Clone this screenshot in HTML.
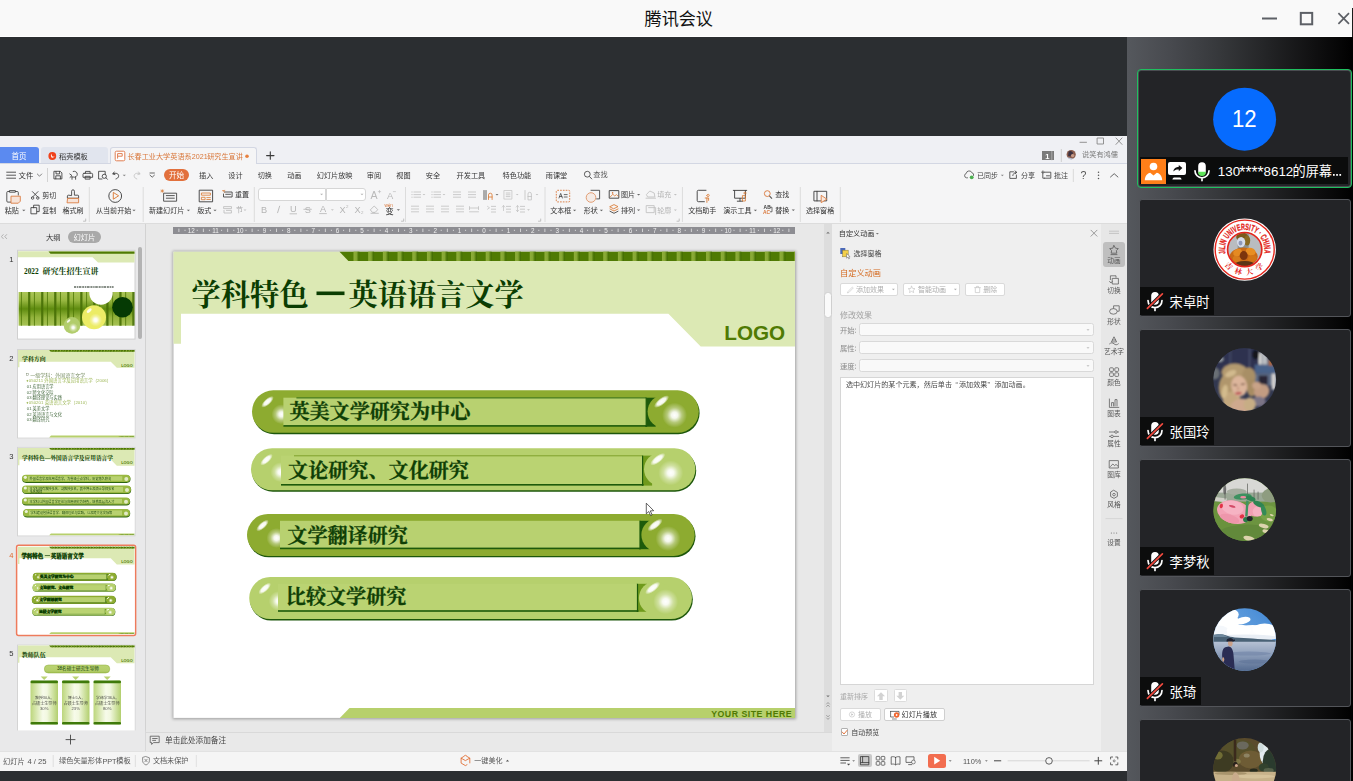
<!DOCTYPE html><html><head><meta charset="utf-8"><title>腾讯会议</title><style>
html,body{margin:0;padding:0;background:#2b2e31;overflow:hidden}
#app{position:relative;width:1353px;height:781px;overflow:hidden;background:#2b2e31;font-family:"Liberation Sans",sans-serif}
#app div{position:absolute;box-sizing:border-box}
#app svg{position:absolute;left:0;top:0;overflow:visible}
#app svg text{font-family:"Liberation Sans","Noto Sans CJK SC",sans-serif}
#app svg text.sf{font-family:"Liberation Serif","Noto Serif CJK SC",serif;font-weight:700}
</style></head><body><div id="app"><div style="left:0px;top:0px;width:1353px;height:37px;background:#f9f9f9;border-bottom:1px solid #fff"></div><div style="left:1352px;top:8px;width:1px;height:29px;background:#1c1c1c"></div><div style="left:1127px;top:37px;width:226px;height:744px;background:linear-gradient(90deg,#55585d 0%,#47494e 20%,#35373a 42%,#232426 62%,#0f0f10 84%,#000 100%)"></div><div style="left:1137px;top:68.8px;width:215.3px;height:119.2px;border:1.4px solid #1fbf5f;border-radius:4px;background:#4a4c51"></div><div style="left:1139.4px;top:71.2px;width:210.5px;height:114.4px;border-radius:2px;background:#232427"></div><div style="left:1140.4px;top:157.2px;width:207.8px;height:27px;background:#0b0c0c"></div><div style="left:1140.9px;top:159px;width:25.1px;height:25.2px;background:#ff7f19"></div><div style="left:1139px;top:199px;width:212px;height:117.6px;border:1px solid #53555a;border-radius:3px;background:#232427"></div><div style="left:1140.2px;top:287.2px;width:73.8px;height:27.4px;background:#0c0d0d"></div><div style="left:1139px;top:329px;width:212px;height:117.6px;border:1px solid #53555a;border-radius:3px;background:#232427"></div><div style="left:1140.2px;top:417.2px;width:73.8px;height:27.4px;background:#0c0d0d"></div><div style="left:1139px;top:459px;width:212px;height:117.6px;border:1px solid #53555a;border-radius:3px;background:#232427"></div><div style="left:1140.2px;top:547.2px;width:73.8px;height:27.4px;background:#0c0d0d"></div><div style="left:1139px;top:589px;width:212px;height:117.6px;border:1px solid #53555a;border-radius:3px;background:#232427"></div><div style="left:1140.2px;top:677.2px;width:61.1px;height:27.4px;background:#0c0d0d"></div><div style="left:1139px;top:718.8px;width:212px;height:117.6px;border:1px solid #53555a;border-radius:3px;background:#232427"></div><div style="left:0px;top:136px;width:1127px;height:635px;background:#f5f5f6"></div><div style="left:0px;top:136px;width:1127px;height:28px;background:#eff0f4;border-bottom:1px solid #d3d7e3"></div><div style="left:0px;top:147px;width:39.3px;height:16.4px;background:#5b8af0;border-radius:0 3px 0 0"></div><div style="left:41px;top:147px;width:67.2px;height:16.4px;background:#e1e5ee;border-radius:3px 3px 0 0"></div><div style="left:109.8px;top:146.6px;width:147.2px;height:17.4px;background:#f5f5f6;border:1px solid #d3d7e3;border-bottom:none;border-radius:3px 3px 0 0"></div><div style="left:0px;top:164px;width:1127px;height:60.4px;background:#f5f5f6;border-bottom:1px solid #dcdcdc"></div><div style="left:0px;top:224.4px;width:145.8px;height:526.2px;background:#e9e9ea;border-right:1px solid #d2d2d2"></div><div style="left:145.8px;top:224.4px;width:678.2px;height:507.9px;background:#e8e8e8"></div><div style="left:824px;top:224.4px;width:8px;height:507.9px;background:#dddddd"></div><div style="left:173px;top:227px;width:622px;height:6.7px;background:#8d8d92"></div><div style="left:145.8px;top:732.3px;width:686.2px;height:18.3px;background:#e9e9e9;border-top:1px solid #d9d9d9"></div><div style="left:832px;top:224.4px;width:269.3px;height:526.2px;background:#efefef"></div><div style="left:1101.3px;top:224.4px;width:25.7px;height:526.2px;background:#e7e7e7"></div><div style="left:1103.2px;top:241.8px;width:21.6px;height:25.4px;background:#bfbfbf;border-radius:3px"></div><div style="left:0px;top:750.6px;width:1127px;height:20.4px;background:#f5f5f5;border-top:1px solid #e2e2e2"></div><div style="left:258px;top:187.5px;width:68.3px;height:13.7px;background:#fff;border:1px solid #d6d6d6;border-radius:3px 0 0 3px"></div><div style="left:325.5px;top:187.5px;width:40.7px;height:13.7px;background:#fff;border:1px solid #d6d6d6;border-radius:0 3px 3px 0"></div><div style="left:840.4px;top:282.7px;width:57.6px;height:13.5px;background:#fff;border:1px solid #dadada;border-radius:2px"></div><div style="left:902.6px;top:282.7px;width:57.8px;height:13.5px;background:#fff;border:1px solid #dadada;border-radius:2px"></div><div style="left:965px;top:282.7px;width:40.4px;height:13.5px;background:#fff;border:1px solid #dadada;border-radius:2px"></div><div style="left:859.3px;top:323.3px;width:234.3px;height:13.1px;background:#f9f9f9;border:1px solid #d9d9d9;border-radius:2.5px"></div><div style="left:859.3px;top:341.3px;width:234.3px;height:13.1px;background:#f9f9f9;border:1px solid #d9d9d9;border-radius:2.5px"></div><div style="left:859.3px;top:359.2px;width:234.3px;height:13px;background:#f9f9f9;border:1px solid #d9d9d9;border-radius:2.5px"></div><div style="left:840.1px;top:376.5px;width:253.5px;height:308.9px;background:#fff;border:1px solid #d6d6d6"></div><div style="left:874.3px;top:689.3px;width:13.4px;height:12.9px;background:#fff;border:1px solid #dcdcdc;border-radius:1.5px"></div><div style="left:893.6px;top:689.3px;width:13.4px;height:12.9px;background:#fff;border:1px solid #dcdcdc;border-radius:1.5px"></div><div style="left:840.4px;top:707.7px;width:40.2px;height:13.5px;background:#fff;border:1px solid #dadada;border-radius:2px"></div><div style="left:884.3px;top:707.7px;width:60.4px;height:13.5px;background:#fff;border:1px solid #cfcfcf;border-radius:2px"></div><div style="left:840.6px;top:728.4px;width:7.8px;height:7.6px;background:#fff;border:1px solid #b0b0b0;border-radius:1px"></div><div style="left:858px;top:754px;width:13.6px;height:13.4px;background:#c9c9c9;border-radius:2px"></div><div style="left:927.6px;top:753.6px;width:18.6px;height:14.1px;background:#f26d4f;border-radius:2.5px"></div><div style="left:68px;top:231.3px;width:32.6px;height:11.8px;background:#a9a9a9;border-radius:6px"></div><div style="left:138.4px;top:247px;width:3.8px;height:91.8px;background:#b3b3b3;border-radius:2px"></div><div style="left:163.6px;top:169px;width:25.7px;height:12.2px;background:#e2703c;border-radius:6.2px"></div><div style="left:824.3px;top:291.5px;width:7.4px;height:26.1px;background:#fafafa;border:1px solid #cfcfcf;border-radius:3.5px"></div><div style="left:1041.8px;top:151px;width:11.8px;height:9.2px;background:#7b7b7b"></div><svg style="position:absolute;left:0;top:0" width="1127" height="781" viewBox="0 0 1127 781"><defs><linearGradient id="stg" x1="0" x2="1"><stop offset="0" stop-color="#8fae3a"/><stop offset=".5" stop-color="#84a632"/><stop offset=".85" stop-color="#4c7607"/><stop offset="1" stop-color="#3f6804"/></linearGradient><radialGradient id="glow"><stop offset="0" stop-color="#fff" stop-opacity="1"/><stop offset=".25" stop-color="#fff" stop-opacity=".9"/><stop offset=".6" stop-color="#fff" stop-opacity=".35"/><stop offset="1" stop-color="#fff" stop-opacity="0"/></radialGradient><linearGradient id="pgd" x1="0" x2="0" y1="0" y2="1"><stop offset="0" stop-color="#92b034"/><stop offset=".7" stop-color="#8aa82f"/><stop offset="1" stop-color="#7f9f28"/></linearGradient><linearGradient id="pgl" x1="0" x2="0" y1="0" y2="1"><stop offset="0" stop-color="#bad373"/><stop offset=".75" stop-color="#b4ce6a"/><stop offset="1" stop-color="#9fbd50"/></linearGradient><radialGradient id="gl2"><stop offset="0" stop-color="#fff" stop-opacity="1"/><stop offset=".55" stop-color="#fff" stop-opacity=".9"/><stop offset="1" stop-color="#fff" stop-opacity="0"/></radialGradient><filter id="b1" x="-20%" y="-50%" width="140%" height="200%"><feGaussianBlur stdDeviation=".7"/></filter><filter id="b2"><feGaussianBlur stdDeviation=".45"/></filter><filter id="sh" x="-5%" y="-5%" width="110%" height="110%"><feGaussianBlur stdDeviation="1.5"/></filter><linearGradient id="bst" x1="0" x2="1"><stop offset="0" stop-color="#4a7206" stop-opacity="0"/><stop offset=".35" stop-color="#456d05" stop-opacity=".95"/><stop offset=".7" stop-color="#4a7206" stop-opacity=".9"/><stop offset="1" stop-color="#4a7206" stop-opacity="0"/></linearGradient><linearGradient id="bam" x1="0" x2="1" spreadMethod="repeat" gradientUnits="userSpaceOnUse" gradientTransform="translate(18 0) scale(9.7 1)"><stop offset="0" stop-color="#5f8a12"/><stop offset=".12" stop-color="#3f6a05"/><stop offset=".3" stop-color="#86a83a"/><stop offset=".6" stop-color="#9dbb52"/><stop offset=".85" stop-color="#7fa22f"/><stop offset="1" stop-color="#5f8a12"/></linearGradient><linearGradient id="bamv" x1="0" x2="0" y1="0" y2="1"><stop offset="0" stop-color="#aac557"/><stop offset=".25" stop-color="#98b741"/><stop offset=".5" stop-color="#5e8b0f"/><stop offset=".75" stop-color="#93b33c"/><stop offset="1" stop-color="#a6c254"/></linearGradient><radialGradient id="yel" cx=".35" cy=".3" r=".75"><stop offset="0" stop-color="#fbfbd0"/><stop offset=".35" stop-color="#eeee70"/><stop offset="1" stop-color="#d9dc55"/></radialGradient><radialGradient id="lgr" cx=".4" cy=".35" r=".75"><stop offset="0" stop-color="#e4efc0"/><stop offset=".4" stop-color="#b4cf6a"/><stop offset="1" stop-color="#98b848"/></radialGradient><linearGradient id="cyl" x1="0" x2="1"><stop offset="0" stop-color="#bcd67c"/><stop offset=".45" stop-color="#f7fbea"/><stop offset=".6" stop-color="#f2f8e0"/><stop offset="1" stop-color="#b2cf6e"/></linearGradient><g id="bg"><rect x="173.5" y="251.7" width="621.5" height="466.2" fill="#fff"/><path fill="#dce9b4" d="M173.5 251.7H795V346.4H700.7L668.4 313.8H181V343.7H173.5z"/><path fill="#4f7a03" d="M339.5 251.7H795V261H348.4z"/><rect x="353.5" y="251.7" width="5.9" height="9.3" fill="url(#stg)"/><rect x="368.19" y="251.7" width="5.9" height="9.3" fill="url(#stg)"/><rect x="382.88" y="251.7" width="5.9" height="9.3" fill="url(#stg)"/><rect x="397.57" y="251.7" width="5.9" height="9.3" fill="url(#stg)"/><rect x="412.26" y="251.7" width="5.9" height="9.3" fill="url(#stg)"/><rect x="426.95" y="251.7" width="5.9" height="9.3" fill="url(#stg)"/><rect x="441.64" y="251.7" width="5.9" height="9.3" fill="url(#stg)"/><rect x="456.33" y="251.7" width="5.9" height="9.3" fill="url(#stg)"/><rect x="471.02" y="251.7" width="5.9" height="9.3" fill="url(#stg)"/><rect x="485.71" y="251.7" width="5.9" height="9.3" fill="url(#stg)"/><rect x="500.4" y="251.7" width="5.9" height="9.3" fill="url(#stg)"/><rect x="515.09" y="251.7" width="5.9" height="9.3" fill="url(#stg)"/><rect x="529.78" y="251.7" width="5.9" height="9.3" fill="url(#stg)"/><rect x="544.47" y="251.7" width="5.9" height="9.3" fill="url(#stg)"/><rect x="559.16" y="251.7" width="5.9" height="9.3" fill="url(#stg)"/><rect x="573.85" y="251.7" width="5.9" height="9.3" fill="url(#stg)"/><rect x="588.54" y="251.7" width="5.9" height="9.3" fill="url(#stg)"/><rect x="603.23" y="251.7" width="5.9" height="9.3" fill="url(#stg)"/><rect x="617.92" y="251.7" width="5.9" height="9.3" fill="url(#stg)"/><rect x="632.61" y="251.7" width="5.9" height="9.3" fill="url(#stg)"/><rect x="647.3" y="251.7" width="5.9" height="9.3" fill="url(#stg)"/><rect x="661.99" y="251.7" width="5.9" height="9.3" fill="url(#stg)"/><rect x="676.68" y="251.7" width="5.9" height="9.3" fill="url(#stg)"/><rect x="691.37" y="251.7" width="5.9" height="9.3" fill="url(#stg)"/><rect x="706.06" y="251.7" width="5.9" height="9.3" fill="url(#stg)"/><rect x="720.75" y="251.7" width="5.9" height="9.3" fill="url(#stg)"/><rect x="735.44" y="251.7" width="5.9" height="9.3" fill="url(#stg)"/><rect x="750.13" y="251.7" width="5.9" height="9.3" fill="url(#stg)"/><rect x="764.82" y="251.7" width="5.9" height="9.3" fill="url(#stg)"/><rect x="779.51" y="251.7" width="5.9" height="9.3" fill="url(#stg)"/><rect x="794.2" y="251.7" width="0.8" height="9.3" fill="url(#stg)"/><text x="724.3" y="340" font-size="20.7" font-weight="700" fill="#4f7a03" stroke="none">LOGO</text><path fill="#b7d06c" d="M349.5 708H795V717.9H339.8z"/><text x="711.2" y="716.9" font-size="8.75" font-weight="700" fill="#4f7a03" stroke="none" textLength="80.5">YOUR SITE HERE</text></g><g id="s4"><rect x="252.8" y="391.7" width="446.8" height="42.5" rx="21.25" fill="#1d570b"/><rect x="252" y="390.3" width="446.8" height="42.5" rx="21.25" fill="#8dab30"/><ellipse cx="267.5" cy="401.8" rx="8" ry="3.2" fill="url(#gl2)" transform="rotate(-42 267.5 401.8)"/><circle cx="281.5" cy="414.3" r="10" fill="url(#glow)"/><rect x="645.2" y="397.7" width="10.5" height="29" fill="#1d5a0b"/><rect x="283.4" y="397.7" width="362.8" height="28" fill="#b8d170"/><rect x="296.4" y="397.4" width="349.8" height="1" fill="#2f6a12"/><rect x="283.4" y="425.1" width="363.8" height="1.6" fill="#1d5a0b"/><rect x="645.6" y="397.7" width="1.2" height="29" fill="#1d5a0b"/><circle cx="664.2" cy="411.55" r="16.6" fill="#8dab30"/><ellipse cx="661.55" cy="401.55" rx="9.2" ry="3.6" fill="url(#gl2)" transform="rotate(-38 661.55 401.55)"/><circle cx="674.55" cy="415.15" r="12.5" fill="url(#glow)"/><rect x="251.8" y="449.6" width="444.4" height="42.1" rx="21.05" fill="#1d570b"/><rect x="251" y="448.2" width="444.4" height="42.1" rx="21.05" fill="#b6d06d"/><ellipse cx="266.5" cy="459.7" rx="8" ry="3.2" fill="url(#gl2)" transform="rotate(-42 266.5 459.7)"/><circle cx="280.5" cy="472.2" r="10" fill="url(#glow)"/><rect x="641.6" y="455.6" width="10.5" height="30" fill="#6f9a1c"/><rect x="281" y="455.6" width="361.6" height="29" fill="#bad372"/><rect x="294" y="455.3" width="348.6" height="1" fill="#7fa12c"/><rect x="281" y="484" width="362.6" height="1.6" fill="#1d5a0b"/><rect x="642" y="455.6" width="1.2" height="30" fill="#1d5a0b"/><circle cx="660.6" cy="469.25" r="16.6" fill="#b6d06d"/><ellipse cx="657.75" cy="459.25" rx="9.2" ry="3.6" fill="url(#gl2)" transform="rotate(-38 657.75 459.25)"/><circle cx="670.75" cy="472.85" r="12.5" fill="url(#glow)"/><rect x="247.8" y="515.4" width="447.7" height="41.9" rx="20.95" fill="#1d570b"/><rect x="247" y="514" width="447.7" height="41.9" rx="20.95" fill="#8dab30"/><ellipse cx="262.5" cy="525.5" rx="8" ry="3.2" fill="url(#gl2)" transform="rotate(-42 262.5 525.5)"/><circle cx="276.5" cy="538" r="10" fill="url(#glow)"/><rect x="639" y="520.8" width="10.5" height="28.4" fill="#1d5a0b"/><rect x="280" y="520.8" width="360" height="27.4" fill="#b8d170"/><rect x="280" y="547.6" width="361" height="1.6" fill="#1d5a0b"/><rect x="639.4" y="520.8" width="1.2" height="28.4" fill="#1d5a0b"/><circle cx="658" cy="534.95" r="16.6" fill="#8dab30"/><ellipse cx="655.05" cy="524.95" rx="9.2" ry="3.6" fill="url(#gl2)" transform="rotate(-38 655.05 524.95)"/><circle cx="668.05" cy="538.55" r="12.5" fill="url(#glow)"/><rect x="250" y="578.4" width="442.8" height="42.1" rx="21.05" fill="#1d570b"/><rect x="249.2" y="577" width="442.8" height="42.1" rx="21.05" fill="#b6d06d"/><ellipse cx="264.7" cy="588.5" rx="8" ry="3.2" fill="url(#gl2)" transform="rotate(-42 264.7 588.5)"/><circle cx="278.7" cy="601" r="10" fill="url(#glow)"/><rect x="636.5" y="583.8" width="10.5" height="28" fill="#6f9a1c"/><rect x="278" y="583.8" width="359.5" height="27" fill="#bad372"/><rect x="278" y="610.2" width="360.5" height="1.6" fill="#1d5a0b"/><rect x="636.9" y="583.8" width="1.2" height="28" fill="#1d5a0b"/><circle cx="655.5" cy="598.05" r="16.6" fill="#b6d06d"/><ellipse cx="652.65" cy="588.05" rx="9.2" ry="3.6" fill="url(#gl2)" transform="rotate(-38 652.65 588.05)"/><circle cx="665.65" cy="601.65" r="12.5" fill="url(#glow)"/></g><g id="s4t"><text class="sf" x="289.4" y="419.3" font-size="20.1" fill="#0f3f06">英美文学研究为中心</text><text class="sf" x="288.1" y="478" font-size="20.1" fill="#0f3f06">文论研究、文化研究</text><text class="sf" x="287.3" y="542.6" font-size="20.1" fill="#0f3f06">文学翻译研究</text><text class="sf" x="285.8" y="604.4" font-size="20.1" fill="#0f3f06">比较文学研究</text></g><g id="s4h"><text class="sf" x="191.6" y="304.7" font-size="29.2" fill="#0b3d02">学科特色</text><rect x="316.5" y="291.5" width="28" height="3.6" fill="#0b3d02" stroke="none"/><text class="sf" x="348.6" y="304.7" font-size="29.2" fill="#0b3d02">英语语言文学</text></g></defs><rect x="172.600" y="251" width="623.400" height="468.200" fill="#000" opacity=".3" filter="url(#sh)"/><use href="#bg"/><use href="#s4"/><use href="#s4h"/><use href="#s4t" stroke="#0f3f06" stroke-width=".28"/><g><rect x="17.5" y="250.3" width="117.5" height="88.8" fill="#fff" stroke="#d0d0d0" stroke-width="1"/><path fill="#dce9b4" d="M18 251.3H134.5V262.5H98L92.5 257.2H18z"/><path fill="#4f7a03" d="M48.5 251.6H134.5V253.7H50.5z"/><rect x="18.6" y="292" width="114.6" height="33.7" fill="url(#bamv)"/><rect x="27.5" y="292" width="3.4" height="33.7" fill="url(#bst)"/><rect x="20.9" y="292" width="1" height="33.7" fill="#4f7808" opacity=".8"/><rect x="40.53" y="292" width="3.4" height="33.7" fill="url(#bst)"/><rect x="33.93" y="292" width="1" height="33.7" fill="#4f7808" opacity=".8"/><rect x="53.56" y="292" width="3.4" height="33.7" fill="url(#bst)"/><rect x="46.96" y="292" width="1" height="33.7" fill="#4f7808" opacity=".8"/><rect x="66.59" y="292" width="3.4" height="33.7" fill="url(#bst)"/><rect x="59.99" y="292" width="1" height="33.7" fill="#4f7808" opacity=".8"/><rect x="79.62" y="292" width="3.4" height="33.7" fill="url(#bst)"/><rect x="73.02" y="292" width="1" height="33.7" fill="#4f7808" opacity=".8"/><rect x="92.65" y="292" width="3.4" height="33.7" fill="url(#bst)"/><rect x="86.05" y="292" width="1" height="33.7" fill="#4f7808" opacity=".8"/><rect x="105.68" y="292" width="3.4" height="33.7" fill="url(#bst)"/><rect x="99.08" y="292" width="1" height="33.7" fill="#4f7808" opacity=".8"/><rect x="118.71" y="292" width="3.4" height="33.7" fill="url(#bst)"/><rect x="112.11" y="292" width="1" height="33.7" fill="#4f7808" opacity=".8"/><rect x="131.74" y="292" width="3.4" height="33.7" fill="url(#bst)"/><rect x="125.14" y="292" width="1" height="33.7" fill="#4f7808" opacity=".8"/><circle cx="101" cy="293" r="11.7" fill="#fff"/><circle cx="122.5" cy="307.2" r="10.3" fill="#053a04"/><circle cx="94" cy="317.2" r="12" fill="#ecec66"/><ellipse cx="89.2" cy="310.6" rx="3" ry="1.5" fill="#fff" opacity=".85" transform="rotate(-40 89.2 310.6)"/><circle cx="95.6" cy="320" r="6.5" fill="url(#glow)"/><circle cx="72" cy="325.4" r="8.3" fill="#b2cd6c"/><ellipse cx="68.6" cy="321" rx="2.2" ry="1.1" fill="#fff" opacity=".85" transform="rotate(-40 68.6 321)"/><circle cx="73.2" cy="327.6" r="4.6" fill="url(#glow)"/><text class="sf" x="24" y="274.2" font-size="7.3" fill="#0b3d02">2022</text><text class="sf" x="42.6" y="274.2" font-size="8" fill="#0b3d02">研究生招生宣讲</text><path d="M74 287h39.6" stroke="#1c2a1c" stroke-width="1.5" stroke-dasharray="2.1 .7 1.4 .6 2.6 .8" opacity=".7"/></g><rect x="17.5" y="349.5" width="117.5" height="88.4" fill="#fff" stroke="#d4d4d4" stroke-width="1"/><use href="#bg" transform="translate(18,350) scale(0.18745) translate(-173.5,-251.7)"/><rect x="17.5" y="447.4" width="117.5" height="88.4" fill="#fff" stroke="#d4d4d4" stroke-width="1"/><use href="#bg" transform="translate(18,447.9) scale(0.18745) translate(-173.5,-251.7)"/><rect x="16.6" y="545.3" width="119" height="90.2" rx="2" fill="#fff" stroke="#ee7b5c" stroke-width="1.5"/><use href="#bg" transform="translate(18,546.7) scale(0.18745) translate(-173.5,-251.7)"/><use href="#s4" transform="translate(18,546.7) scale(0.18745) translate(-173.5,-251.7)"/><use href="#s4t" transform="translate(18,546.7) scale(0.18745) translate(-173.5,-251.7)" stroke="#0b3d02" stroke-width="2.2"/><use href="#s4h" transform="translate(18,547.9) scale(0.18745) translate(-173.5,-251.7)" stroke="#0b3d02" stroke-width="2.2"/><rect x="17.5" y="645.1" width="117.5" height="88.4" fill="#fff" stroke="#d4d4d4" stroke-width="1"/><use href="#bg" transform="translate(18,645.6) scale(0.18745) translate(-173.5,-251.7)"/><text class="sf" x="22" y="361" font-size="5.9" fill="#0b3d02">学科方向</text><g opacity=".8"><rect x="26.6" y="373.6" width="1.6" height="2" fill="none" stroke="#4b5f3a" stroke-width=".4"/><text x="30.2" y="376.7" font-size="5" fill="#55703a">一级学科：外国语言文学</text><text x="28.8" y="382.3" font-size="4.4" fill="#86a62e">050211 外国语言学及应用语言学（2006）</text><text x="26.8" y="388.3" font-size="4.2" fill="#0d3d05">01 应用语言学</text><text x="26.8" y="393.5" font-size="4.2" fill="#0d3d05">02 跨文化交际</text><text x="26.8" y="399.1" font-size="4.2" fill="#0d3d05">03 翻译理论与实践</text><text x="28.8" y="404.3" font-size="4.4" fill="#86a62e">050201 英语语言文学（2010）</text><text x="26.8" y="410.1" font-size="4.2" fill="#0d3d05">01 英美文学</text><text x="26.8" y="415.8" font-size="4.2" fill="#0d3d05">02 英语语言与文化</text><text x="26.8" y="421.3" font-size="4.2" fill="#0d3d05">03 翻译研究</text><path d="M26.4 380.8l1-1.1l1 1.1l-1 1.1z" fill="#86a62e"/><path d="M26.4 402.8l1-1.1l1 1.1l-1 1.1z" fill="#86a62e"/></g><text class="sf" x="22" y="459.7" font-size="5.7" fill="#0b3d02">学科特色—外国语言学及应用语言学</text><rect x="22.2" y="475.2" width="108.3" height="7.7" rx="3.85" fill="#2c6410"/><rect x="22" y="474.7" width="108.3" height="7.3" rx="3.85" fill="#9ab942"/><rect x="28" y="476.2" width="94.3" height="4.5" fill="#b8d170"/><circle cx="25.3" cy="477.3" r="1.6" fill="#fff" opacity=".8"/><circle cx="126.3" cy="479.05" r="2" fill="#fff" opacity=".7"/><text x="29.5" y="480" font-size="3.15" fill="#0d3d05" opacity=".9">外国语言学及应用语言学，为省级重点学科，历史悠久积淀</text><rect x="22.2" y="485.9" width="109" height="8.2" rx="4.1" fill="#2c6410"/><rect x="22" y="485.4" width="109" height="7.8" rx="4.1" fill="#9ab942"/><rect x="28" y="486.9" width="95" height="5" fill="#b8d170"/><circle cx="25.3" cy="488" r="1.6" fill="#fff" opacity=".8"/><circle cx="127" cy="490" r="2" fill="#fff" opacity=".7"/><text x="29.5" y="489.5" font-size="3.15" fill="#0d3d05" opacity=".9">本学科现有教授多名、副教授多名，其中博士及硕士导师多名</text><text x="29.7" y="492.6" font-size="3.15" fill="#0d3d05" opacity=".9">多名教师</text><rect x="22.2" y="497.9" width="108" height="7.6" rx="3.8" fill="#2c6410"/><rect x="22" y="497.4" width="108" height="7.2" rx="3.8" fill="#9ab942"/><rect x="28" y="498.9" width="94" height="4.4" fill="#b8d170"/><circle cx="25.3" cy="500" r="1.6" fill="#fff" opacity=".8"/><circle cx="126" cy="501.7" r="2" fill="#fff" opacity=".7"/><text x="29.5" y="502.6" font-size="3.15" fill="#0d3d05" opacity=".9">本学科以外国语言学理论与应用研究为特色，培养高层次人才</text><rect x="23.2" y="509.4" width="107" height="8.1" rx="4.05" fill="#2c6410"/><rect x="23" y="508.9" width="107" height="7.7" rx="4.05" fill="#9ab942"/><rect x="29" y="510.4" width="93" height="4.9" fill="#b8d170"/><circle cx="26.3" cy="511.5" r="1.6" fill="#fff" opacity=".8"/><circle cx="126" cy="513.45" r="2" fill="#fff" opacity=".7"/><text x="30.5" y="514.4" font-size="3.15" fill="#0d3d05" opacity=".9">学科建设包括语言学、翻译理论与实践，以及跨文化交际等</text><text class="sf" x="21.8" y="657" font-size="6" fill="#0b3d02">教师队伍</text><rect x="44.3" y="665" width="65.5" height="8" rx="4" fill="url(#pgl)" stroke="#8fae3f" stroke-width=".5"/><text x="57" y="670.4" font-size="4.6" fill="#0d3d05">38名硕士研究生导师</text><rect x="30.5" y="680.6" width="27.5" height="44" rx="2" fill="url(#cyl)"/><rect x="30.5" y="680.6" width="27.5" height="2.6" rx="1.2" fill="#3f7a0a"/><rect x="30.5" y="722" width="27.5" height="2.6" rx="1.2" fill="#3f7a0a"/><path d="M40.7 676.5h7l-3.5 3.6z" fill="#b9d272"/><g opacity=".78"><text x="35" y="699" font-size="3.9" fill="#222">教授30人,</text><text x="32" y="704.5" font-size="4.1" fill="#222">占硕士生导师</text><text x="40" y="709.7" font-size="4.2" fill="#222">30%</text></g><rect x="62" y="680.6" width="27.5" height="44" rx="2" fill="url(#cyl)"/><rect x="62" y="680.6" width="27.5" height="2.6" rx="1.2" fill="#3f7a0a"/><rect x="62" y="722" width="27.5" height="2.6" rx="1.2" fill="#3f7a0a"/><path d="M72.2 676.5h7l-3.5 3.6z" fill="#b9d272"/><g opacity=".78"><text x="67.8" y="699" font-size="3.9" fill="#222">博士5人,</text><text x="63.5" y="704.5" font-size="4.1" fill="#222">占硕士生导师</text><text x="71.5" y="709.7" font-size="4.2" fill="#222">23%</text></g><rect x="93.5" y="680.6" width="27.5" height="44" rx="2" fill="url(#cyl)"/><rect x="93.5" y="680.6" width="27.5" height="2.6" rx="1.2" fill="#3f7a0a"/><rect x="93.5" y="722" width="27.5" height="2.6" rx="1.2" fill="#3f7a0a"/><path d="M103.7 676.5h7l-3.5 3.6z" fill="#b9d272"/><g opacity=".78"><text x="96" y="699" font-size="3.9" fill="#222">学缘学36人,</text><text x="95" y="704.5" font-size="4.1" fill="#222">占硕士生导师</text><text x="103" y="709.7" font-size="4.2" fill="#222">80%</text></g><rect x="0" y="730.4" width="145.3" height="20.2" fill="#e9e9ea"/></svg><svg width="1127" height="781" viewBox="0 0 1127 781" style="filter:blur(.42px)"><text x="11.6" y="158.7" font-size="7.5" fill="#fff">首页</text><circle cx="52.3" cy="156" r="3.9" fill="#f0421c"/><path d="M51.2 153.6c-.6 1.6-.3 3.2.6 4.1c1.3.3 2.4-.5 2.9-1.9c-.8 1.1-2 1.1-2.6.3c-.6-.8-.6-1.7-.9-2.5z" fill="#fff"/><text x="59" y="158.59" font-size="7.2" fill="#333">稻壳模板</text><rect x="115.2" y="151.2" width="9.6" height="9.6" rx="1.3" fill="#fff" stroke="#e07e52" stroke-width="1"/><path d="M117.6 158.6v-5h4.6v2.6h-4.6" fill="none" stroke="#e07e52" stroke-width="1"/><text x="127.4" y="158.57" font-size="7.15" fill="#d9773a">长春工业大学英语系</text><text x="191.75" y="158.57" font-size="7.15" fill="#d9773a">2021</text><text x="207.15" y="158.57" font-size="7.15" fill="#d9773a">研究生宣讲</text><circle cx="247" cy="156.2" r="1.8" fill="#e8813f"/><path d="M266.600 155.600h7.400M270.300 151.900v7.400" stroke="#3a3a3a" stroke-width="1.1" fill="none" stroke-linejoin="round" stroke-linecap="round"/><path d="M1080 142.3h6.5" stroke="#888" stroke-width="0.9" fill="none" stroke-linejoin="round" stroke-linecap="round"/><path d="M1097.5 138h6v6h-6z" stroke="#888" stroke-width="0.9" fill="none" stroke-linejoin="round" stroke-linecap="round"/><path d="M1116 138l6 6.4M1122 138l-6 6.4" stroke="#888" stroke-width="0.9" fill="none" stroke-linejoin="round" stroke-linecap="round"/><text x="1045.2" y="158.6" font-size="7.6" font-weight="700" fill="#fff">1</text><rect x="1051.3" y="151" width="1" height="9.2" fill="#aaa"/><path d="M1061.3 149L1061.3 162" stroke="#cfcfcf" stroke-width="1" fill="none"/><circle cx="1071.2" cy="154.6" r="4.6" fill="#8b5e4e"/><path d="M1068.6 151.5a3 3 0 0 1 4.5 1.5l-1.5 3.5l-3.5-.5z" fill="#3c3140"/><circle cx="1072.6" cy="155.6" r="1.7" fill="#c79a86"/><path d="M1067.5 157.2a4.6 4.6 0 0 0 6 1.5z" fill="#b9c4d8"/><text x="1082" y="157.19" font-size="7.2" fill="#7a7a7a">说笑有鸿儒</text><path d="M6.3 172.2L16 172.2" stroke="#444" stroke-width="0.9" fill="none"/><path d="M6.3 175.2L16 175.2" stroke="#444" stroke-width="0.9" fill="none"/><path d="M6.3 178.2L16 178.2" stroke="#444" stroke-width="0.9" fill="none"/><text x="18.6" y="177.86" font-size="7.4" fill="#333">文件</text><path d="M37.3 174l2.2 2.2l2.2-2.2" stroke="#666" stroke-width="0.8" fill="none" stroke-linejoin="round" stroke-linecap="round"/><path d="M47.5 168L47.5 182" stroke="#d3d3d3" stroke-width="1" fill="none"/><path d="M54.3 171.3h6l1.6 1.6v6h-7.6zM56 171.5v2.4h3.6v-2.4M55.8 178.8v-3h4.6v3" stroke="#3b3b3b" stroke-width="0.85" fill="none" stroke-linejoin="round" stroke-linecap="round"/><path d="M73.2 171.4a3 3 0 1 1 0 5.6h-1.2M69.8 174l2.2 1.6l-2 1.8M72 177v2.3M75.6 177v2.3" stroke="#3b3b3b" stroke-width="0.85" fill="none" stroke-linejoin="round" stroke-linecap="round"/><path d="M84 173.3h7.6a1 1 0 0 1 1 1v3h-9.6v-3a1 1 0 0 1 1-1zM85.5 173.2v-1.8h4.6v1.8M85.5 176.3h4.6v2.8h-4.6z" stroke="#3b3b3b" stroke-width="0.85" fill="none" stroke-linejoin="round" stroke-linecap="round"/><path d="M105.2 174.5v-3.2h-6.6v7.7h3.4M107.4 179.3l-1.5-1.6" stroke="#3b3b3b" stroke-width="0.85" fill="none" stroke-linejoin="round" stroke-linecap="round"/><circle cx="104.3" cy="176.3" r="2.1" fill="none" stroke="#3b3b3b" stroke-width=".85"/><path d="M114.2 172l-1.4 1.9l2.1.6M113 173.8c3.3-1.5 6 .1 5.6 2.5c-.3 1.5-1.4 2.2-2.6 2.6" stroke="#3b3b3b" stroke-width="0.9" fill="none" stroke-linejoin="round" stroke-linecap="round"/><path d="M122.67 174.69h3.25l-1.62 1.62z" fill="#888"/><path d="M138.6 172l1.4 1.9l-2.1.6M139.8 173.8c-3.3-1.5-6 .1-5.6 2.5c.3 1.5 1.4 2.2 2.6 2.6" stroke="#c4c4c4" stroke-width="0.9" fill="none" stroke-linejoin="round" stroke-linecap="round"/><path d="M150 173h4.4" stroke="#444" stroke-width="0.8" fill="none" stroke-linejoin="round" stroke-linecap="round"/><path d="M150 175.2l2.2 2l2.2-2" stroke="#444" stroke-width="0.8" fill="none" stroke-linejoin="round" stroke-linecap="round"/><text x="168.9" y="177.84" font-size="7.6" fill="#fff">开始</text><text x="199" y="177.77" font-size="7.15" fill="#333">插入</text><text x="228.3" y="177.77" font-size="7.15" fill="#333">设计</text><text x="257.7" y="177.77" font-size="7.15" fill="#333">切换</text><text x="287.2" y="177.77" font-size="7.15" fill="#333">动画</text><text x="316.8" y="177.77" font-size="7.15" fill="#333">幻灯片放映</text><text x="366.8" y="177.77" font-size="7.15" fill="#333">审阅</text><text x="396.3" y="177.77" font-size="7.15" fill="#333">视图</text><text x="425.8" y="177.77" font-size="7.15" fill="#333">安全</text><text x="456.6" y="177.77" font-size="7.15" fill="#333">开发工具</text><text x="502.6" y="177.77" font-size="7.15" fill="#333">特色功能</text><text x="545.8" y="177.77" font-size="7.15" fill="#333">雨课堂</text><circle cx="587.3" cy="174.2" r="2.9" fill="none" stroke="#444" stroke-width=".85"/><path d="M589.4 176.4L592 179.2" stroke="#444" stroke-width="0.9" fill="none"/><text x="593.3" y="177.39" font-size="7.2" fill="#555">查找</text><path d="M967.5 177.8h-1a2.2 2.2 0 0 1-.3-4.3a3 3 0 0 1 5.8-.6a2 2 0 0 1 1.6 2.6" stroke="#555" stroke-width="0.85" fill="none" stroke-linejoin="round" stroke-linecap="round"/><circle cx="971.7" cy="177.3" r="1.9" fill="#4caf50"/><text x="977" y="177.82" font-size="7" fill="#444">已同步</text><path d="M1000.8 174.85h3l-1.5 1.5z" fill="#888"/><path d="M1013.5 171.8h-3.7v6.6h6.6v-3.4M1012.8 175.6c.3-2 1.6-3.2 3.7-3.3M1015 171l1.8 1.3l-1.6 1.5" stroke="#444" stroke-width="0.85" fill="none" stroke-linejoin="round" stroke-linecap="round"/><text x="1021" y="177.82" font-size="7" fill="#444">分享</text><path d="M1044.5 172.2h6.3v6h-6.3M1044.5 178.2h-1.7v-4.5M1041.6 172.2h2.6M1042.9 170.9v2.6M1046.5 175.8h3" stroke="#444" stroke-width="0.85" fill="none" stroke-linejoin="round" stroke-linecap="round"/><text x="1054" y="177.82" font-size="7" fill="#444">批注</text><path d="M1073.3 169L1073.3 182" stroke="#d9d9d9" stroke-width="1" fill="none"/><text x="1080.6" y="179" font-size="10.6" fill="#555">?</text><circle cx="1098.5" cy="172.2" r=".75" fill="#555"/><circle cx="1098.5" cy="175.3" r=".75" fill="#555"/><circle cx="1098.5" cy="178.4" r=".75" fill="#555"/><path d="M1110.5 177l3.7-3.3l3.7 3.3" stroke="#555" stroke-width="0.9" fill="none" stroke-linejoin="round" stroke-linecap="round"/><path d="M9.5 191.5h-1.7a1 1 0 0 0-1 1v8.6a1 1 0 0 0 1 1h3M15.6 191.5h1.7a1 1 0 0 1 1 1v2.6M9.8 190.6h5.6v1.6h-5.6z" stroke="#3b3b3b" stroke-width="0.85" fill="none" stroke-linejoin="round" stroke-linecap="round"/><path d="M11 196.2h9.3v5l-2 2h-7.3z" fill="#f6e3d8" stroke="#d9773a" stroke-width=".85" stroke-linejoin="round"/><text x="4.8" y="212.84" font-size="7.05" fill="#333">粘贴</text><path d="M22.18 209.69h3.25l-1.62 1.62z" fill="#666"/><path d="M32.4 191.6l5.6 5.6M38 191.6l-5.6 5.6" stroke="#3b3b3b" stroke-width="0.85" fill="none" stroke-linejoin="round" stroke-linecap="round"/><circle cx="32.6" cy="198" r="1.25" fill="none" stroke="#3b3b3b" stroke-width=".8"/><circle cx="37.8" cy="198" r="1.25" fill="none" stroke="#3b3b3b" stroke-width=".8"/><text x="42.3" y="197.54" font-size="7.05" fill="#333">剪切</text><path d="M33.6 207.8v-2.6h5.6v6.4h-2M31.3 207.6h5.4v6.2h-5.4z" stroke="#3b3b3b" stroke-width="0.85" fill="none" stroke-linejoin="round" stroke-linecap="round"/><text x="42.3" y="212.84" font-size="7.05" fill="#333">复制</text><path d="M71.6 195.2v-4a1.4 1.4 0 0 1 2.8 0v4h3.4a.8.8 0 0 1 .8.8v2.2h-11.2v-2.2a.8.8 0 0 1 .8-.8z" stroke="#3b3b3b" stroke-width="0.85" fill="none" stroke-linejoin="round" stroke-linecap="round"/><path d="M67.6 198.4h11v4.4h-11.6z" fill="#f6e3d8" stroke="#d9773a" stroke-width=".85" stroke-linejoin="round"/><text x="62.4" y="212.84" font-size="7.05" fill="#333">格式刷</text><path d="M83.5 221.2h2.2v-2.2" stroke="#aaa" stroke-width="0.7" fill="none" stroke-linejoin="round" stroke-linecap="round"/><path d="M89.3 187L89.3 222" stroke="#dcdcdc" stroke-width="1" fill="none"/><circle cx="115.2" cy="196" r="6.4" fill="none" stroke="#3b3b3b" stroke-width=".9"/><path d="M113.3 192.8v6.4l5-3.2z" stroke="#d9772f" stroke-width="0.9" fill="none" stroke-linejoin="round" stroke-linecap="round"/><text x="96" y="212.84" font-size="7.05" fill="#333">从当前开始</text><path d="M132.38 209.69h3.25l-1.62 1.62z" fill="#666"/><path d="M143.2 187L143.2 222" stroke="#dcdcdc" stroke-width="1" fill="none"/><path d="M164 193.2h12.6v8h-12.6zM166.3 195.6h8M166.3 198.2h8" stroke="#3b3b3b" stroke-width="0.85" fill="none" stroke-linejoin="round" stroke-linecap="round"/><path d="M162.3 189.6v2.8M160.9 191h2.8M161.3 190l2 2M163.3 190l-2 2" stroke="#d9772f" stroke-width="0.6" fill="none" stroke-linejoin="round" stroke-linecap="round"/><text x="149" y="212.84" font-size="7.05" fill="#333">新建幻灯片</text><path d="M186.78 209.69h3.25l-1.62 1.62z" fill="#666"/><path d="M199.6 190.2h13v11.6h-13z" stroke="#3b3b3b" stroke-width="0.9" fill="none" stroke-linejoin="round" stroke-linecap="round"/><path d="M201.8 193h8.6v2.2h-8.6zM201.8 197.3h3.3v2.4h-3.3zM206.8 197.6h3.6M206.8 199.5h3.6" stroke="#d9772f" stroke-width="0.8" fill="none" stroke-linejoin="round" stroke-linecap="round"/><text x="197.3" y="212.84" font-size="7.05" fill="#333">版式</text><path d="M213.38 209.69h3.25l-1.62 1.62z" fill="#666"/><path d="M224.3 192h7.8v5h-8.6v-3M225.7 194.3h4.8" stroke="#3b3b3b" stroke-width="0.85" fill="none" stroke-linejoin="round" stroke-linecap="round"/><path d="M223 190.6l1.6 1.8M224.8 190.4l-2 .3" stroke="#d9772f" stroke-width="0.7" fill="none" stroke-linejoin="round" stroke-linecap="round"/><text x="235" y="197.04" font-size="7.05" fill="#333">重置</text><path d="M224 206.6h7.5v2h-7.5zM226.4 210.4h5v2.6h-7.4v-2.6" stroke="#bdbdbd" stroke-width="0.85" fill="none" stroke-linejoin="round" stroke-linecap="round"/><text x="236" y="212.34" font-size="7.05" fill="#aaa">节</text><path d="M243.5 209.45h3l-1.5 1.5z" fill="#c4c4c4"/><path d="M254.3 187L254.3 222" stroke="#dcdcdc" stroke-width="1" fill="none"/><path d="M320.1 193.85h3l-1.5 1.5z" fill="#b5b5b5"/><path d="M360.5 193.85h3l-1.5 1.5z" fill="#b5b5b5"/><text x="370.6" y="199" font-size="10.6" fill="#b9b9b9">A</text><text x="387" y="199" font-size="9.4" fill="#b9b9b9">A</text><path d="M378.3 191.6h2.4M379.5 190.4v2.4M393.3 191.6h2.2" stroke="#b9b9b9" stroke-width="0.6" fill="none" stroke-linejoin="round" stroke-linecap="round"/><text x="261" y="212.7" font-size="9.2" fill="#b5b5b5">B</text><text x="290" y="212.3" font-size="9.2" fill="#b5b5b5">U</text><text x="304.8" y="212.7" font-size="9.2" fill="#b5b5b5">S</text><text x="320" y="212" font-size="9.2" fill="#b5b5b5">A</text><text x="339.5" y="212.7" font-size="9.2" fill="#b5b5b5">X</text><text x="354.5" y="212.7" font-size="9.2" fill="#b5b5b5">X</text><path d="M279.600 206.200l-2 6.500" stroke="#b5b5b5" stroke-width="0.9" fill="none" stroke-linejoin="round" stroke-linecap="round"/><path d="M290 213.8h6.6M303.8 209.3h7.6M319.6 213.6h6.8" stroke="#b5b5b5" stroke-width="0.8" fill="none" stroke-linejoin="round" stroke-linecap="round"/><text x="346" y="207.6" font-size="4.4" fill="#b5b5b5">2</text><text x="361" y="213.8" font-size="4.4" fill="#b5b5b5">2</text><path d="M330.9 209.25h3l-1.5 1.5z" fill="#c4c4c4"/><path d="M370.6 209.6l3.6-3.6l3.6 3.6l-2.6 2.8h-2.4zM371 213.3h7.4" stroke="#b5b5b5" stroke-width="0.8" fill="none" stroke-linejoin="round" stroke-linecap="round"/><text x="385.6" y="214.3" font-size="8.2" fill="#333">变</text><text x="384.4" y="207.3" font-size="4.6" fill="#d9773a">wén</text><path d="M396.77 209.19h3.25l-1.62 1.62z" fill="#666"/><path d="M401.5 221.2h2.2v-2.2" stroke="#aaa" stroke-width="0.7" fill="none" stroke-linejoin="round" stroke-linecap="round"/><path d="M405.5 187L405.5 222" stroke="#dcdcdc" stroke-width="1" fill="none"/><path d="M413.5 192L421 192" stroke="#c0c0c0" stroke-width="0.8" fill="none"/><path d="M413.5 194.6L421 194.6" stroke="#c0c0c0" stroke-width="0.8" fill="none"/><path d="M413.5 197.2L421 197.2" stroke="#c0c0c0" stroke-width="0.8" fill="none"/><rect x="411.5" y="191.5" width="1" height="1" fill="#c0c0c0"/><rect x="411.5" y="194.1" width="1" height="1" fill="#c0c0c0"/><rect x="411.5" y="196.7" width="1" height="1" fill="#c0c0c0"/><path d="M433.5 192L441 192" stroke="#c0c0c0" stroke-width="0.8" fill="none"/><path d="M433.5 194.6L441 194.6" stroke="#c0c0c0" stroke-width="0.8" fill="none"/><path d="M433.5 197.2L441 197.2" stroke="#c0c0c0" stroke-width="0.8" fill="none"/><rect x="431.5" y="191.5" width="1" height="1" fill="#c0c0c0"/><rect x="431.5" y="194.1" width="1" height="1" fill="#c0c0c0"/><rect x="431.5" y="196.7" width="1" height="1" fill="#c0c0c0"/><path d="M422.62 193.91h2.75l-1.38 1.38z" fill="#c0c0c0"/><path d="M442.62 193.91h2.75l-1.38 1.38z" fill="#c0c0c0"/><path d="M453 192L461 192" stroke="#c0c0c0" stroke-width="0.8" fill="none"/><path d="M453 194.6L461 194.6" stroke="#c0c0c0" stroke-width="0.8" fill="none"/><path d="M453 197.2L461 197.2" stroke="#c0c0c0" stroke-width="0.8" fill="none"/><path d="M468 192L476 192" stroke="#c0c0c0" stroke-width="0.8" fill="none"/><path d="M468 194.6L476 194.6" stroke="#c0c0c0" stroke-width="0.8" fill="none"/><path d="M468 197.2L476 197.2" stroke="#c0c0c0" stroke-width="0.8" fill="none"/><path d="M484 190.5v9M486 190.5v9" stroke="#3b3b3b" stroke-width="0.8" fill="none" stroke-linejoin="round" stroke-linecap="round"/><path d="M488.5 199.5v-4.5a1.8 1.8 0 0 1 3.6 0v4.5M488.5 197h3.6" stroke="#d9772f" stroke-width="0.8" fill="none" stroke-linejoin="round" stroke-linecap="round"/><path d="M495.5 194.05h3l-1.5 1.5z" fill="#777"/><path d="M504.3 190.5h7.6v8.6h-7.6z" stroke="#c0c0c0" stroke-width="0.7" fill="none" stroke-linejoin="round" stroke-linecap="round"/><path d="M505.8 193L510.4 193" stroke="#c0c0c0" stroke-width="0.8" fill="none"/><path d="M505.8 194.8L510.4 194.8" stroke="#c0c0c0" stroke-width="0.8" fill="none"/><path d="M505.8 196.6L510.4 196.6" stroke="#c0c0c0" stroke-width="0.8" fill="none"/><path d="M515.83 193.91h2.75l-1.38 1.38z" fill="#c0c0c0"/><path d="M525 190.5v9M528 199.5v-5.5a1.7 1.7 0 0 1 3.4 0v5.5zM528 196.5h3.4" stroke="#c0c0c0" stroke-width="0.8" fill="none" stroke-linejoin="round" stroke-linecap="round"/><path d="M535.62 193.91h2.75l-1.38 1.38z" fill="#c0c0c0"/><path d="M411 206.2L419 206.2" stroke="#c0c0c0" stroke-width="0.8" fill="none"/><path d="M411 209L419 209" stroke="#c0c0c0" stroke-width="0.8" fill="none"/><path d="M411 211.8L419 211.8" stroke="#c0c0c0" stroke-width="0.8" fill="none"/><path d="M426 206.2L434 206.2" stroke="#c0c0c0" stroke-width="0.8" fill="none"/><path d="M426 209L434 209" stroke="#c0c0c0" stroke-width="0.8" fill="none"/><path d="M426 211.8L434 211.8" stroke="#c0c0c0" stroke-width="0.8" fill="none"/><path d="M441 206.2L449 206.2" stroke="#c0c0c0" stroke-width="0.8" fill="none"/><path d="M441 209L449 209" stroke="#c0c0c0" stroke-width="0.8" fill="none"/><path d="M441 211.8L449 211.8" stroke="#c0c0c0" stroke-width="0.8" fill="none"/><path d="M456 206.2L464 206.2" stroke="#c0c0c0" stroke-width="0.8" fill="none"/><path d="M456 209L464 209" stroke="#c0c0c0" stroke-width="0.8" fill="none"/><path d="M456 211.8L464 211.8" stroke="#c0c0c0" stroke-width="0.8" fill="none"/><path d="M469.5 206.6v3M478.5 206.6v3M469.5 208h9M469.5 211.8h9" stroke="#c0c0c0" stroke-width="0.8" fill="none" stroke-linejoin="round" stroke-linecap="round"/><path d="M491 206.4L496 206.4" stroke="#c0c0c0" stroke-width="0.8" fill="none"/><path d="M491 209.2L496 209.2" stroke="#c0c0c0" stroke-width="0.8" fill="none"/><path d="M491 212L496 212" stroke="#c0c0c0" stroke-width="0.8" fill="none"/><path d="M487.5 206.4l2 1.4l-2 1.4" stroke="#c0c0c0" stroke-width="0.7" fill="none" stroke-linejoin="round" stroke-linecap="round"/><path d="M506 206.4L511 206.4" stroke="#c0c0c0" stroke-width="0.8" fill="none"/><path d="M506 209.2L511 209.2" stroke="#c0c0c0" stroke-width="0.8" fill="none"/><path d="M506 212L511 212" stroke="#c0c0c0" stroke-width="0.8" fill="none"/><path d="M503.5 205.6v5M502.3 207l1.2-1.4l1.2 1.4" stroke="#c0c0c0" stroke-width="0.7" fill="none" stroke-linejoin="round" stroke-linecap="round"/><path d="M520 206.4L525 206.4" stroke="#c0c0c0" stroke-width="0.8" fill="none"/><path d="M520 209.2L525 209.2" stroke="#c0c0c0" stroke-width="0.8" fill="none"/><path d="M520 212L525 212" stroke="#c0c0c0" stroke-width="0.8" fill="none"/><path d="M517.5 205.6v6M516.3 207l1.2-1.4l1.2 1.4M516.3 210.2l1.2 1.4l1.2-1.4" stroke="#c0c0c0" stroke-width="0.7" fill="none" stroke-linejoin="round" stroke-linecap="round"/><path d="M527.12 209.31h2.75l-1.38 1.38z" fill="#c0c0c0"/><path d="M538.5 221.2h2.2v-2.2" stroke="#aaa" stroke-width="0.7" fill="none" stroke-linejoin="round" stroke-linecap="round"/><path d="M545 187L545 222" stroke="#dcdcdc" stroke-width="1" fill="none"/><rect x="556.3" y="190.3" width="13.4" height="11.6" rx="1" fill="none" stroke="#d9773a" stroke-width=".9" stroke-dasharray="1.7 1.1"/><path d="M559 198l1.7-4.6l1.7 4.6M559.6 196.5h2.2M564.2 194.6h3M564.2 197h3" stroke="#3b3b3b" stroke-width="0.75" fill="none" stroke-linejoin="round" stroke-linecap="round"/><text x="550.2" y="212.84" font-size="7.05" fill="#333">文本框</text><path d="M572.98 209.69h3.25l-1.62 1.62z" fill="#666"/><path d="M591 190.3h8.6v8.6h-3" stroke="#3b3b3b" stroke-width="0.85" fill="none" stroke-linejoin="round" stroke-linecap="round"/><circle cx="591" cy="197.5" r="4.8" fill="#f4ebe6" stroke="#dc8a58" stroke-width=".8"/><text x="583.8" y="212.84" font-size="7.05" fill="#333">形状</text><path d="M599.77 209.69h3.25l-1.62 1.62z" fill="#666"/><path d="M609.6 190.6h9.2v7.6h-9.2z" stroke="#3b3b3b" stroke-width="0.9" fill="none" stroke-linejoin="round" stroke-linecap="round"/><path d="M610.4 196.8l2.4-2.6l2 1.8l1.6-1.4l2 1.8" stroke="#d9772f" stroke-width="0.75" fill="none" stroke-linejoin="round" stroke-linecap="round"/><circle cx="612.6" cy="192.9" r=".8" fill="#d9773a"/><text x="621" y="197.14" font-size="7.05" fill="#333">图片</text><path d="M636.98 193.99h3.25l-1.62 1.62z" fill="#666"/><path d="M646 198.2h9.6M647.4 196.6l-1-2l3.4-3.6l4.4 2l.6 3.6z" stroke="#c0c0c0" stroke-width="0.85" fill="none" stroke-linejoin="round" stroke-linecap="round"/><text x="657.3" y="197.14" font-size="7.05" fill="#b5b5b5">填充</text><path d="M673.9 194.05h3l-1.5 1.5z" fill="#c0c0c0"/><path d="M610 206.6l4-2l4 2l-4 2zM610 209l4 2l4-2" stroke="#d9772f" stroke-width="0.85" fill="none" stroke-linejoin="round" stroke-linecap="round"/><path d="M610 211.3l4 2l4-2" stroke="#3b3b3b" stroke-width="0.85" fill="none" stroke-linejoin="round" stroke-linecap="round"/><text x="621" y="212.54" font-size="7.05" fill="#333">排列</text><path d="M636.98 209.39h3.25l-1.62 1.62z" fill="#666"/><path d="M646.6 205.6h7.6v7h-7.6zM648.6 207.6h7v7" stroke="#c0c0c0" stroke-width="0.85" fill="none" stroke-linejoin="round" stroke-linecap="round"/><text x="657.3" y="212.54" font-size="7.05" fill="#b5b5b5">轮廓</text><path d="M673.9 209.45h3l-1.5 1.5z" fill="#c0c0c0"/><path d="M677 221.2h2.2v-2.2" stroke="#aaa" stroke-width="0.7" fill="none" stroke-linejoin="round" stroke-linecap="round"/><path d="M682.4 187L682.4 222" stroke="#dcdcdc" stroke-width="1" fill="none"/><path d="M706 190.3h-7.6a1.2 1.2 0 0 0-1.2 1.2v9a1.2 1.2 0 0 0 1.2 1.2h6" stroke="#3b3b3b" stroke-width="0.9" fill="none" stroke-linejoin="round" stroke-linecap="round"/><path d="M706.8 195.4a1.2 1.2 0 1 1 0 .1M705.2 198h3.4v2.4M706.9 198v4.4" stroke="#d9772f" stroke-width="0.85" fill="none" stroke-linejoin="round" stroke-linecap="round"/><text x="688.2" y="212.84" font-size="7.05" fill="#333">文档助手</text><path d="M733.3 190.4h13.4M734.6 190.6v7.6h10.8v-7.6M740 198.4v2.6M737.3 201.2h5.4" stroke="#3b3b3b" stroke-width="0.9" fill="none" stroke-linejoin="round" stroke-linecap="round"/><path d="M744 193a1 1 0 1 1 0 .1M742.8 195.6h2.6v5.4h-2.6z" stroke="#d9772f" stroke-width="0.8" fill="none" stroke-linejoin="round" stroke-linecap="round"/><text x="723.3" y="212.84" font-size="7.05" fill="#333">演示工具</text><path d="M753.77 209.69h3.25l-1.62 1.62z" fill="#666"/><circle cx="767.3" cy="193.6" r="2.9" fill="none" stroke="#d9773a" stroke-width=".9"/><path d="M769.4 195.8L772 198.6" stroke="#555" stroke-width="1.1" fill="none"/><text x="775.2" y="197.24" font-size="7.05" fill="#333">查找</text><text x="763.6" y="209" font-size="4.9" font-weight="700" fill="#3b3b3b">AB</text><text x="763" y="213.8" font-size="4.9" font-weight="700" fill="#d9773a">AC</text><path d="M770 207.2h2v4.6h-1.6" stroke="#3b3b3b" stroke-width="0.7" fill="none" stroke-linejoin="round" stroke-linecap="round"/><text x="775.2" y="212.64" font-size="7.05" fill="#333">替换</text><path d="M791.67 209.49h3.25l-1.62 1.62z" fill="#666"/><path d="M800.3 187L800.3 222" stroke="#dcdcdc" stroke-width="1" fill="none"/><path d="M814.3 191.3h12.4v9.6h-12.4zM817 191.3v9.6" stroke="#3b3b3b" stroke-width="0.9" fill="none" stroke-linejoin="round" stroke-linecap="round"/><path d="M821.2 195.3v7.4l5.6-3.6z" fill="#f8e9df" stroke="#d9773a" stroke-width=".85" stroke-linejoin="round"/><text x="806" y="212.84" font-size="7.05" fill="#333">选择窗格</text><path d="M840.3 187L840.3 222" stroke="#dcdcdc" stroke-width="1" fill="none"/><path d="M3.2 234.6l-1.8 2l1.8 2M6.6 234.6l-1.8 2l1.8 2" stroke="#999" stroke-width="0.7" fill="none" stroke-linejoin="round" stroke-linecap="round"/><text x="46" y="239.83" font-size="7.3" fill="#333">大纲</text><text x="73.4" y="239.83" font-size="7.3" fill="#fff">幻灯片</text><text x="9.3" y="262.3" font-size="7.6" fill="#333">1</text><text x="9.3" y="360.5" font-size="7.6" fill="#333">2</text><text x="9.3" y="458.9" font-size="7.6" fill="#333">3</text><text x="9.3" y="557.9" font-size="7.6" fill="#e06a2e">4</text><text x="9.3" y="656.1" font-size="7.6" fill="#333">5</text><path d="M66 739.6h9M70.5 735.1v9" stroke="#444" stroke-width="0.9" fill="none" stroke-linejoin="round" stroke-linecap="round"/><g font-size="6.3" fill="#f0f0f0" text-anchor="middle"><text x="191.2" y="232.6">12</text><text x="215.6" y="232.6">11</text><text x="240" y="232.6">10</text><text x="264.4" y="232.6">9</text><text x="288.8" y="232.6">8</text><text x="313.2" y="232.6">7</text><text x="337.6" y="232.6">6</text><text x="362" y="232.6">5</text><text x="386.4" y="232.6">4</text><text x="410.8" y="232.6">3</text><text x="435.2" y="232.6">2</text><text x="459.6" y="232.6">1</text><text x="484" y="232.6">0</text><text x="508.4" y="232.6">1</text><text x="532.8" y="232.6">2</text><text x="557.2" y="232.6">3</text><text x="581.6" y="232.6">4</text><text x="606" y="232.6">5</text><text x="630.4" y="232.6">6</text><text x="654.8" y="232.6">7</text><text x="679.2" y="232.6">8</text><text x="703.6" y="232.6">9</text><text x="728" y="232.6">10</text><text x="752.4" y="232.6">11</text><text x="776.8" y="232.6">12</text></g><rect x="178.5" y="228.6" width=".8" height="3.4" fill="#e4e4e4"/><rect x="184.5" y="229.8" width="1" height="1" fill="#e4e4e4"/><rect x="202.9" y="228.6" width=".8" height="3.4" fill="#e4e4e4"/><rect x="196.7" y="229.8" width="1" height="1" fill="#e4e4e4"/><rect x="208.9" y="229.8" width="1" height="1" fill="#e4e4e4"/><rect x="227.3" y="228.6" width=".8" height="3.4" fill="#e4e4e4"/><rect x="221.1" y="229.8" width="1" height="1" fill="#e4e4e4"/><rect x="233.3" y="229.8" width="1" height="1" fill="#e4e4e4"/><rect x="251.7" y="228.6" width=".8" height="3.4" fill="#e4e4e4"/><rect x="245.5" y="229.8" width="1" height="1" fill="#e4e4e4"/><rect x="257.7" y="229.8" width="1" height="1" fill="#e4e4e4"/><rect x="276.1" y="228.6" width=".8" height="3.4" fill="#e4e4e4"/><rect x="269.9" y="229.8" width="1" height="1" fill="#e4e4e4"/><rect x="282.1" y="229.8" width="1" height="1" fill="#e4e4e4"/><rect x="300.5" y="228.6" width=".8" height="3.4" fill="#e4e4e4"/><rect x="294.3" y="229.8" width="1" height="1" fill="#e4e4e4"/><rect x="306.5" y="229.8" width="1" height="1" fill="#e4e4e4"/><rect x="324.9" y="228.6" width=".8" height="3.4" fill="#e4e4e4"/><rect x="318.7" y="229.8" width="1" height="1" fill="#e4e4e4"/><rect x="330.9" y="229.8" width="1" height="1" fill="#e4e4e4"/><rect x="349.3" y="228.6" width=".8" height="3.4" fill="#e4e4e4"/><rect x="343.1" y="229.8" width="1" height="1" fill="#e4e4e4"/><rect x="355.3" y="229.8" width="1" height="1" fill="#e4e4e4"/><rect x="373.7" y="228.6" width=".8" height="3.4" fill="#e4e4e4"/><rect x="367.5" y="229.8" width="1" height="1" fill="#e4e4e4"/><rect x="379.7" y="229.8" width="1" height="1" fill="#e4e4e4"/><rect x="398.1" y="228.6" width=".8" height="3.4" fill="#e4e4e4"/><rect x="391.9" y="229.8" width="1" height="1" fill="#e4e4e4"/><rect x="404.1" y="229.8" width="1" height="1" fill="#e4e4e4"/><rect x="422.5" y="228.6" width=".8" height="3.4" fill="#e4e4e4"/><rect x="416.3" y="229.8" width="1" height="1" fill="#e4e4e4"/><rect x="428.5" y="229.8" width="1" height="1" fill="#e4e4e4"/><rect x="446.9" y="228.6" width=".8" height="3.4" fill="#e4e4e4"/><rect x="440.7" y="229.8" width="1" height="1" fill="#e4e4e4"/><rect x="452.9" y="229.8" width="1" height="1" fill="#e4e4e4"/><rect x="471.3" y="228.6" width=".8" height="3.4" fill="#e4e4e4"/><rect x="465.1" y="229.8" width="1" height="1" fill="#e4e4e4"/><rect x="477.3" y="229.8" width="1" height="1" fill="#e4e4e4"/><rect x="495.7" y="228.6" width=".8" height="3.4" fill="#e4e4e4"/><rect x="489.5" y="229.8" width="1" height="1" fill="#e4e4e4"/><rect x="501.7" y="229.8" width="1" height="1" fill="#e4e4e4"/><rect x="520.1" y="228.6" width=".8" height="3.4" fill="#e4e4e4"/><rect x="513.9" y="229.8" width="1" height="1" fill="#e4e4e4"/><rect x="526.1" y="229.8" width="1" height="1" fill="#e4e4e4"/><rect x="544.5" y="228.6" width=".8" height="3.4" fill="#e4e4e4"/><rect x="538.3" y="229.8" width="1" height="1" fill="#e4e4e4"/><rect x="550.5" y="229.8" width="1" height="1" fill="#e4e4e4"/><rect x="568.9" y="228.6" width=".8" height="3.4" fill="#e4e4e4"/><rect x="562.7" y="229.8" width="1" height="1" fill="#e4e4e4"/><rect x="574.9" y="229.8" width="1" height="1" fill="#e4e4e4"/><rect x="593.3" y="228.6" width=".8" height="3.4" fill="#e4e4e4"/><rect x="587.1" y="229.8" width="1" height="1" fill="#e4e4e4"/><rect x="599.3" y="229.8" width="1" height="1" fill="#e4e4e4"/><rect x="617.7" y="228.6" width=".8" height="3.4" fill="#e4e4e4"/><rect x="611.5" y="229.8" width="1" height="1" fill="#e4e4e4"/><rect x="623.7" y="229.8" width="1" height="1" fill="#e4e4e4"/><rect x="642.1" y="228.6" width=".8" height="3.4" fill="#e4e4e4"/><rect x="635.9" y="229.8" width="1" height="1" fill="#e4e4e4"/><rect x="648.1" y="229.8" width="1" height="1" fill="#e4e4e4"/><rect x="666.5" y="228.6" width=".8" height="3.4" fill="#e4e4e4"/><rect x="660.3" y="229.8" width="1" height="1" fill="#e4e4e4"/><rect x="672.5" y="229.8" width="1" height="1" fill="#e4e4e4"/><rect x="690.9" y="228.6" width=".8" height="3.4" fill="#e4e4e4"/><rect x="684.7" y="229.8" width="1" height="1" fill="#e4e4e4"/><rect x="696.9" y="229.8" width="1" height="1" fill="#e4e4e4"/><rect x="715.3" y="228.6" width=".8" height="3.4" fill="#e4e4e4"/><rect x="709.1" y="229.8" width="1" height="1" fill="#e4e4e4"/><rect x="721.3" y="229.8" width="1" height="1" fill="#e4e4e4"/><rect x="739.7" y="228.6" width=".8" height="3.4" fill="#e4e4e4"/><rect x="733.5" y="229.8" width="1" height="1" fill="#e4e4e4"/><rect x="745.7" y="229.8" width="1" height="1" fill="#e4e4e4"/><rect x="764.1" y="228.6" width=".8" height="3.4" fill="#e4e4e4"/><rect x="757.9" y="229.8" width="1" height="1" fill="#e4e4e4"/><rect x="770.1" y="229.8" width="1" height="1" fill="#e4e4e4"/><rect x="788.5" y="228.6" width=".8" height="3.4" fill="#e4e4e4"/><rect x="782.3" y="229.8" width="1" height="1" fill="#e4e4e4"/><path d="M150.6 736.2h8.6v6.4h-5.6l-2 1.8v-1.8h-1zM152.6 738.5h4.6M152.6 740.4h3" stroke="#555" stroke-width="0.8" fill="none" stroke-linejoin="round" stroke-linecap="round"/><text x="165" y="743.45" font-size="7.65" fill="#444">单击此处添加备注</text><path d="M829.88 233.54h-3.75l1.88 -1.88z" fill="#777"/><path d="M826.25 695.42h3.5l-1.75 1.75z" fill="#777"/><path d="M826.6 706.5l1.4-1.5l1.4 1.5M826.6 704l1.4-1.5l1.4 1.5" stroke="#777" stroke-width="0.6" fill="none" stroke-linejoin="round" stroke-linecap="round"/><path d="M826.6 715.4l1.4 1.5l1.4-1.5M826.6 717.9l1.4 1.5l1.4-1.5" stroke="#777" stroke-width="0.6" fill="none" stroke-linejoin="round" stroke-linecap="round"/><text x="838.8" y="236.07" font-size="7.15" fill="#333">自定义动画</text><path d="M875.9 233.05h3l-1.5 1.5z" fill="#777"/><path d="M1091 230.2l6 6M1097 230.2l-6 6" stroke="#777" stroke-width="0.7" fill="none" stroke-linejoin="round" stroke-linecap="round"/><rect x="840.3" y="248" width="5" height="6" fill="#4a69b8"/><rect x="842.6" y="250.2" width="5.6" height="6.6" fill="#f2cf4a" stroke="#8a7a3a" stroke-width=".5"/><path d="M846.6 253.6v4.6l1.2-1l.9 1.7l.8-.4l-.9-1.6l1.5-.2z" fill="#fff" stroke="#333" stroke-width=".4"/><text x="853.6" y="256.12" font-size="7" fill="#444">选择窗格</text><text x="840" y="275.85" font-size="8.2" fill="#d4691e">自定义动画</text><path d="M848 291.6l4.4-4.6l.9.9l-4.4 4.6l-1.2.3z" stroke="#c4c4c4" stroke-width="0.6" fill="none" stroke-linejoin="round" stroke-linecap="round"/><text x="856" y="291.92" font-size="7" fill="#b0b0b0">添加效果</text><path d="M891.9 288.85h3l-1.5 1.5z" fill="#b0b0b0"/><path d="M911.6 286.2l1 2.2l2.4.3l-1.8 1.6l.5 2.3l-2.1-1.2l-2.1 1.2l.5-2.3l-1.8-1.6l2.4-.3z" stroke="#c0c0c0" stroke-width="0.6" fill="none" stroke-linejoin="round" stroke-linecap="round"/><text x="918" y="291.92" font-size="7" fill="#aaa">智能动画</text><path d="M953.9 288.85h3l-1.5 1.5z" fill="#b0b0b0"/><path d="M974.6 287.6h5.8M976.4 287.4v-1h2.2v1M975.3 288v4.6h4.4v-4.6" stroke="#c4c4c4" stroke-width="0.7" fill="none" stroke-linejoin="round" stroke-linecap="round"/><text x="983.2" y="291.92" font-size="7" fill="#b0b0b0">删除</text><text x="840" y="318.08" font-size="8" fill="#a3a3a3">修改效果</text><text x="840" y="332.63" font-size="7.3" fill="#8a8a8a">开始</text><rect x="855" y="328.6" width=".9" height=".9" fill="#8a8a8a"/><rect x="855" y="331.8" width=".9" height=".9" fill="#8a8a8a"/><path d="M1086.5 329.25h3l-1.5 1.5z" fill="#bcbcbc"/><text x="840" y="350.63" font-size="7.3" fill="#8a8a8a">属性</text><rect x="855" y="346.6" width=".9" height=".9" fill="#8a8a8a"/><rect x="855" y="349.8" width=".9" height=".9" fill="#8a8a8a"/><path d="M1086.5 347.25h3l-1.5 1.5z" fill="#bcbcbc"/><text x="840" y="368.63" font-size="7.3" fill="#8a8a8a">速度</text><rect x="855" y="364.6" width=".9" height=".9" fill="#8a8a8a"/><rect x="855" y="367.8" width=".9" height=".9" fill="#8a8a8a"/><path d="M1086.5 365.25h3l-1.5 1.5z" fill="#bcbcbc"/><g font-size="7.05" fill="#484848"><text x="845.91" y="386.54">选</text><text x="852.98" y="386.54">中</text><text x="860.05" y="386.54">幻</text><text x="867.12" y="386.54">灯</text><text x="874.19" y="386.54">片</text><text x="881.26" y="386.54">的</text><text x="888.33" y="386.54">某</text><text x="895.4" y="386.54">个</text><text x="902.47" y="386.54">元</text><text x="909.54" y="386.54">素</text><text x="916.6" y="386.54">，</text><text x="923.68" y="386.54">然</text><text x="930.75" y="386.54">后</text><text x="937.82" y="386.54">单</text><text x="944.89" y="386.54">击</text><text x="955.6" y="386.54">“</text><text x="959.03" y="386.54">添</text><text x="966.1" y="386.54">加</text><text x="973.17" y="386.54">效</text><text x="980.24" y="386.54">果</text><text x="987.6" y="386.54">”</text><text x="994.38" y="386.54">添</text><text x="1001.45" y="386.54">加</text><text x="1008.52" y="386.54">动</text><text x="1015.59" y="386.54">画</text><text x="1022.65" y="386.54">。</text></g><text x="840" y="698.72" font-size="7" fill="#a8a8a8">重新排序</text><path d="M881 692.2l4 4h-2.3v3.8h-3.4v-3.8h-2.3z" fill="#d2d2d2"/><path d="M900.3 699.8l4-4h-2.3v-3.8h-3.4v3.8h-2.3z" fill="#d2d2d2"/><circle cx="852" cy="714.5" r="2.6" fill="none" stroke="#bdbdbd" stroke-width=".6"/><path d="M851.3 713.2v2.6l2-1.3z" fill="#bdbdbd"/><text x="858" y="717.02" font-size="7" fill="#b0b0b0">播放</text><path d="M890.6 711.4h8.4v3M890.6 711.4v5.6h3" stroke="#3b3b3b" stroke-width="0.7" fill="none" stroke-linejoin="round" stroke-linecap="round"/><circle cx="896.6" cy="715" r="2.7" fill="#f0642c"/><path d="M895.9 713.7v2.6l2.1-1.3z" fill="#fff"/><path d="M892.4 719h4" stroke="#3b3b3b" stroke-width="0.6" fill="none" stroke-linejoin="round" stroke-linecap="round"/><text x="901.6" y="717.06" font-size="7.1" fill="#333">幻灯片播放</text><path d="M842.2 732l1.8 2l3-3.6" stroke="#e06a2e" stroke-width="0.9" fill="none" stroke-linejoin="round" stroke-linecap="round"/><text x="851.3" y="735.02" font-size="7" fill="#444">自动预览</text><path d="M1109 231.2L1119 231.2" stroke="#b5b5b5" stroke-width="0.7" fill="none"/><path d="M1109 233.4L1119 233.4" stroke="#b5b5b5" stroke-width="0.7" fill="none"/><g font-size="6.7" fill="#555" text-anchor="middle"><text x="1114" y="262.5">动画</text><text x="1114" y="293">切换</text><text x="1114" y="323.5">形状</text><text x="1114" y="354.3">艺术字</text><text x="1114" y="384.7">颜色</text><text x="1114" y="415.5">图表</text><text x="1114" y="446">属性</text><text x="1114" y="477">图库</text><text x="1114" y="507.3">风格</text><text x="1114" y="545.4">设置</text></g><path d="M1114 245.6l1.5 2.6l2.8.4l-1.9 2l.4 2.6h-5.6l.4-2.6l-1.9-2l2.8-.4zM1111 254.6h6" stroke="#555" stroke-width="0.75" fill="none" stroke-linejoin="round" stroke-linecap="round"/><path d="M1110.4 279.6v-3.8h5.6v1.6M1112.6 278.4h5.8v5.6h-5.8zM1109.6 281.4l1.2 1.6l1.4-1.4" stroke="#555" stroke-width="0.75" fill="none" stroke-linejoin="round" stroke-linecap="round"/><path d="M1113.6 308.2v-2.4h5.6v5.4h-1.6" stroke="#555" stroke-width="0.75" fill="none" stroke-linejoin="round" stroke-linecap="round"/><ellipse cx="1113.4" cy="311.4" rx="3.8" ry="2.8" fill="none" stroke="#555" stroke-width=".75"/><path d="M1111.6 341.6l2.4-4.8l2.4 4.8zM1112.4 340h3.2M1109.6 343.8c1.4-1.3 3-1.3 4.4 0c1.4 1.3 3 1.3 4.4 0" stroke="#555" stroke-width="0.75" fill="none" stroke-linejoin="round" stroke-linecap="round"/><rect x="1109.6" y="367.8" width="3.8" height="3.6" rx=".9" fill="none" stroke="#555" stroke-width=".75"/><rect x="1114.8" y="367.8" width="3.8" height="3.6" rx=".9" fill="none" stroke="#555" stroke-width=".75"/><rect x="1109.6" y="372.8" width="3.8" height="3.6" rx=".9" fill="none" stroke="#555" stroke-width=".75"/><rect x="1114.8" y="372.8" width="3.8" height="3.6" rx=".9" fill="none" stroke="#555" stroke-width=".75"/><path d="M1109.4 399v8.4h9.4M1111.6 406v-3.4h2v3.4M1115 406v-6.4h2v6.4" stroke="#555" stroke-width="0.75" fill="none" stroke-linejoin="round" stroke-linecap="round"/><path d="M1109.4 432h9.2M1109.4 436.4h9.2" stroke="#555" stroke-width="0.75" fill="none" stroke-linejoin="round" stroke-linecap="round"/><circle cx="1116" cy="432" r="1.3" fill="#e7e7e7" stroke="#555" stroke-width=".7"/><circle cx="1112" cy="436.4" r="1.3" fill="#e7e7e7" stroke="#555" stroke-width=".7"/><path d="M1109.6 460.6h8.8v7.4h-8.8zM1110.6 466.4l2.2-2.4l1.8 1.6l1.4-1.2l1.8 1.6" stroke="#555" stroke-width="0.75" fill="none" stroke-linejoin="round" stroke-linecap="round"/><path d="M1114 490.4l3.4 2v4l-3.4 2l-3.4-2v-4z" stroke="#555" stroke-width="0.75" fill="none" stroke-linejoin="round" stroke-linecap="round"/><circle cx="1114" cy="494.6" r="1.3" fill="none" stroke="#555" stroke-width=".7"/><path d="M1105.5 518.6L1122.5 518.6" stroke="#d0d0d0" stroke-width="0.8" fill="none"/><circle cx="1111.4" cy="533" r=".6" fill="#777"/><circle cx="1114" cy="533" r=".6" fill="#777"/><circle cx="1116.6" cy="533" r=".6" fill="#777"/><text x="3" y="763.51" font-size="7.25" fill="#555">幻灯片</text><text x="27.4" y="763.6" font-size="7.7" fill="#555">4 / 25</text><path d="M53.2 755L53.2 767" stroke="#dedede" stroke-width="1" fill="none"/><text x="59" y="763.49" font-size="7.2" fill="#555">绿色矢量形体</text><text x="102.4" y="763.6" font-size="7.3" fill="#555">PPT</text><text x="116.2" y="763.49" font-size="7.2" fill="#555">模板</text><path d="M135.3 755L135.3 767" stroke="#dedede" stroke-width="1" fill="none"/><path d="M146 756.6l3.4 1.2v3c0 2-1.6 3.4-3.4 4.2c-1.8-.8-3.4-2.2-3.4-4.2v-3zM144.8 759.2l2.4 2.6M147.2 759.2l-2.4 2.6" stroke="#666" stroke-width="0.7" fill="none" stroke-linejoin="round" stroke-linecap="round"/><text x="153" y="763.45" font-size="7.07" fill="#555">文档未保护</text><path d="M196.3 755L196.3 767" stroke="#e0e0e0" stroke-width="1" fill="none"/><path d="M463.6 756.6l-2.5 1.5v5l4.3 2.5l1.6-.9M467 756.5l2.8 1.600v4.8M461.2 758.2l4.2 2.400l4.300-2.400M464.200 756l1.200-.7l1.200.7" stroke="#e06a2e" stroke-width="0.85" fill="none" stroke-linejoin="round" stroke-linecap="round"/><text x="474.3" y="763.45" font-size="7.07" fill="#555">一键美化</text><path d="M509.12 761.41h-3.25l1.62 -1.62z" fill="#555"/><path d="M840.4 757.8L849.6 757.8" stroke="#444" stroke-width="0.85" fill="none"/><path d="M840.4 760.4L849.6 760.4" stroke="#444" stroke-width="0.85" fill="none"/><path d="M840.4 763L846 763" stroke="#444" stroke-width="0.85" fill="none"/><path d="M846.98 763.79h3.25l-1.62 1.62z" fill="#444"/><path d="M852.23 760.31h2.75l-1.38 1.38z" fill="#777"/><path d="M860.8 756.6h8v8.2h-8zM860.8 762.6h8M862.6 756.8v5.6" stroke="#333" stroke-width="0.8" fill="none" stroke-linejoin="round" stroke-linecap="round"/><rect x="876.2" y="756.4" width="3.6" height="3.6" rx=".7" fill="none" stroke="#444" stroke-width=".75"/><rect x="881.2" y="756.4" width="3.6" height="3.6" rx=".7" fill="none" stroke="#444" stroke-width=".75"/><rect x="876.2" y="761.6" width="3.6" height="3.6" rx=".7" fill="none" stroke="#444" stroke-width=".75"/><rect x="881.2" y="761.6" width="3.6" height="3.6" rx=".7" fill="none" stroke="#444" stroke-width=".75"/><path d="M895.6 757.4c-1.4-.9-2.8-.9-4.4-.5v7.4c1.6-.4 3-.4 4.4.5c1.4-.9 2.8-.9 4.4-.5v-7.4c-1.6-.4-3-.4-4.4.5zM895.6 757.4v7.4" stroke="#444" stroke-width="0.75" fill="none" stroke-linejoin="round" stroke-linecap="round"/><path d="M906.4 756.8h7.6v5.6h-7.6zM908.6 764.6h3.2" stroke="#444" stroke-width="0.75" fill="none" stroke-linejoin="round" stroke-linecap="round"/><circle cx="913.4" cy="762" r="1.9" fill="#f5f5f5" stroke="#444" stroke-width=".6"/><path d="M934.2 756.8v7.8l6-3.9z" fill="#fff"/><path d="M948.7 760.25h3l-1.5 1.5z" fill="#777"/><text x="963" y="763.6" font-size="7.4" fill="#555">110%</text><path d="M985.02 760.31h2.75l-1.38 1.38z" fill="#777"/><path d="M994 760.8L1001.2 760.8" stroke="#444" stroke-width="1" fill="none"/><path d="M1007.6 760.8L1089.6 760.8" stroke="#d6d6d6" stroke-width="1" fill="none"/><circle cx="1049" cy="760.9" r="3.3" fill="#f5f5f5" stroke="#444" stroke-width=".85"/><path d="M1094.8 760.8h7M1098.3 757.3v7" stroke="#444" stroke-width="1" fill="none" stroke-linejoin="round" stroke-linecap="round"/><path d="M1110.6 759v-2h2M1115.8 757h2v2M1117.8 762.8v2h-2M1112.6 764.8h-2v-2" stroke="#444" stroke-width="0.8" fill="none" stroke-linejoin="round" stroke-linecap="round"/><circle cx="1114.2" cy="760.9" r="1" fill="none" stroke="#444" stroke-width=".6"/><path d="M646.3 503.2v10.6l2.5-2.3l1.8 4l1.5-.7l-1.8-3.9l3.4-.2z" fill="#fff" stroke="#222" stroke-width=".7"/></svg><svg width="1353" height="781" viewBox="0 0 1353 781"><text x="644.6" y="25.2" font-size="17.1" fill="#111">腾讯会议</text><path d="M1262 18.5h15" stroke="#5d6066" stroke-width="2" fill="none"/><rect x="1300.8" y="12.9" width="11.4" height="11.4" fill="none" stroke="#5d6066" stroke-width="2"/><path d="M1338.4 13.2l10.6 10.6M1349 13.2l-10.6 10.6" stroke="#5d6066" stroke-width="1.7" fill="none"/><circle cx="1244.6" cy="119.2" r="31.5" fill="#066bfe"/><text x="1244.3" y="127.2" text-anchor="middle" font-family="Liberation Sans,sans-serif" font-size="23.6" fill="#fff" textLength="24.6" lengthAdjust="spacingAndGlyphs">12</text><circle cx="1153.5" cy="166.5" r="3.8" fill="#fff"/><path d="M1144.8 180.2c.2-4.6 2.6-6.6 5.4-7.4l3.3 2.6l3.3-2.6c2.8.8 5.2 2.8 5.4 7.4z" fill="#fff"/><rect x="1168" y="162" width="18" height="13" rx="2" fill="#fff"/><path d="M1172.4 179.4c.6-1.6 1.4-1.8 2.4-1.8h4.4c1 0 1.8.2 2.4 1.8z" fill="#fff"/><path d="M1173.2 171.6c.6-3 2.6-4.6 5.6-4.8v-1.9l3.6 3.2l-3.6 3.2v-1.9c-2.4-.1-4.2.5-5.6 2.2z" fill="#111"/><rect x="1198.2" y="162.2" width="7.6" height="12.8" rx="3.8" fill="#fff"/><path d="M1198.2 171.8h7.6v.4a3.8 3.8 0 0 1-7.6 0z" fill="#5fe35a"/><path d="M1195 170.8a7 7 0 0 0 14 0M1202 178v2.6" fill="none" stroke="#fff" stroke-width="1.7" stroke-linecap="round"/><text x="1217.8" y="175.7" font-size="13.4" fill="#fff">130</text><text x="1239.33" y="178.3" font-size="15.6" fill="#fff">****</text><text x="1263.49" y="175.7" font-size="13.4" fill="#fff">8612</text><text x="1292.49" y="176.3" font-size="13.2" fill="#fff">的屏幕</text><rect x="1332.99" y="174" width="1.7" height="1.8" fill="#fff"/><rect x="1336.19" y="174" width="1.7" height="1.8" fill="#fff"/><rect x="1339.39" y="174" width="1.7" height="1.8" fill="#fff"/><rect x="1151.2" y="292" width="7.6" height="12.8" rx="3.8" fill="#fff"/><path d="M1148 300.6a7 7 0 0 0 14 0M1155 307.8v2.6" fill="none" stroke="#fff" stroke-width="1.7" stroke-linecap="round"/><path d="M1147.4 308.4l15 -14.6" stroke="#0c0d0d" stroke-width="3.4"/><path d="M1147.4 308.4l15 -14.6" stroke="#f04a3f" stroke-width="1.7" stroke-linecap="round"/><text x="1169.6" y="306.5" font-size="13.3" fill="#fff">宋卓时</text><rect x="1151.2" y="422" width="7.6" height="12.8" rx="3.8" fill="#fff"/><path d="M1148 430.6a7 7 0 0 0 14 0M1155 437.8v2.6" fill="none" stroke="#fff" stroke-width="1.7" stroke-linecap="round"/><path d="M1147.4 438.4l15 -14.6" stroke="#0c0d0d" stroke-width="3.4"/><path d="M1147.4 438.4l15 -14.6" stroke="#f04a3f" stroke-width="1.7" stroke-linecap="round"/><text x="1169.6" y="436.5" font-size="13.3" fill="#fff">张国玲</text><rect x="1151.2" y="552" width="7.6" height="12.8" rx="3.8" fill="#fff"/><path d="M1148 560.6a7 7 0 0 0 14 0M1155 567.8v2.6" fill="none" stroke="#fff" stroke-width="1.7" stroke-linecap="round"/><path d="M1147.4 568.4l15 -14.6" stroke="#0c0d0d" stroke-width="3.4"/><path d="M1147.4 568.4l15 -14.6" stroke="#f04a3f" stroke-width="1.7" stroke-linecap="round"/><text x="1169.6" y="566.5" font-size="13.3" fill="#fff">李梦秋</text><rect x="1151.2" y="682" width="7.6" height="12.8" rx="3.8" fill="#fff"/><path d="M1148 690.6a7 7 0 0 0 14 0M1155 697.8v2.6" fill="none" stroke="#fff" stroke-width="1.7" stroke-linecap="round"/><path d="M1147.4 698.4l15 -14.6" stroke="#0c0d0d" stroke-width="3.4"/><path d="M1147.4 698.4l15 -14.6" stroke="#f04a3f" stroke-width="1.7" stroke-linecap="round"/><text x="1169.6" y="696.5" font-size="13.3" fill="#fff">张琦</text></svg><svg width="1353" height="781" viewBox="0 0 1353 781"><defs><filter id="ab" x="-10%" y="-10%" width="120%" height="120%"><feGaussianBlur stdDeviation=".7"/></filter><filter id="ab2" x="-10%" y="-10%" width="120%" height="120%"><feGaussianBlur stdDeviation="1.05"/></filter><clipPath id="ac0"><circle cx="1244.7" cy="249.6" r="31.4"/></clipPath><clipPath id="ac1"><circle cx="1244.7" cy="379.6" r="31.4"/></clipPath><clipPath id="ac2"><circle cx="1244.7" cy="509.6" r="31.4"/></clipPath><clipPath id="ac3"><circle cx="1244.7" cy="639.6" r="31.4"/></clipPath><clipPath id="ac4"><circle cx="1244.7" cy="769.4" r="31.4"/></clipPath><clipPath id="ac0i"><circle cx="1244.7" cy="249.6" r="16.6"/></clipPath><linearGradient id="wat" x1="0" x2="0" y1="0" y2="1"><stop offset="0" stop-color="#b9c4d6"/><stop offset=".45" stop-color="#8c9db9"/><stop offset="1" stop-color="#4f668c"/></linearGradient><linearGradient id="sky" x1="0" x2="1" y1="1" y2="0"><stop offset="0" stop-color="#8ebce8"/><stop offset="1" stop-color="#3f86d4"/></linearGradient></defs><circle cx="1244.7" cy="249.6" r="31.2" fill="#fff"/><circle cx="1244.7" cy="249.6" r="29.5" fill="none" stroke="#e3261c" stroke-width="1.4"/><g clip-path="url(#ac0i)"><rect x="1226.7" y="231.6" width="36" height="36" fill="#b9bcc0"/><g filter="url(#ab)"><rect x="1237.7" y="231.6" width="11" height="36" fill="#8d8f8c"/><ellipse cx="1242.2" cy="237.1" rx="6" ry="4.5" fill="#7a5a1e"/><ellipse cx="1247.2" cy="240.6" rx="3" ry="5" fill="#8a6a22"/><ellipse cx="1241.1" cy="242.1" rx="4.2" ry="5.2" fill="#d5dbea"/><ellipse cx="1240.5" cy="243.1" rx="2" ry="2.4" fill="#8e98b8"/><ellipse cx="1243.7" cy="256.6" rx="14" ry="9" fill="#c96a16"/><ellipse cx="1237.7" cy="252.6" rx="4.5" ry="3.5" fill="#e58a22" transform="rotate(-20 1237.7 252.6)"/><ellipse cx="1250.7" cy="251.6" rx="5" ry="3.8" fill="#e88e24" transform="rotate(15 1250.7 251.6)"/><ellipse cx="1243.7" cy="255.6" rx="4" ry="4.5" fill="#7c3510"/><ellipse cx="1236.7" cy="259.1" rx="4" ry="3" fill="#d87c1c" transform="rotate(20 1236.7 259.1)"/><ellipse cx="1252.2" cy="258.6" rx="4.5" ry="3.2" fill="#d27418" transform="rotate(-25 1252.2 258.6)"/><ellipse cx="1244.7" cy="264.6" rx="10" ry="3.6" fill="#5a3418"/></g></g><circle cx="1244.7" cy="249.6" r="17.1" fill="none" stroke="#e3261c" stroke-width="1.7"/><path id="arc0" d="M1225.43 253.7A19.7 19.7 0 1 1 1263.97 253.7" fill="none"/><text font-family="Liberation Sans,sans-serif" font-weight="700" font-size="9" fill="#e3261c" stroke="#e3261c" stroke-width=".3" textLength="69.14" lengthAdjust="spacingAndGlyphs"><textPath href="#arc0">JILIN UNIVERSITY · CHINA</textPath></text><text class="sf" x="0" y="2.8" text-anchor="middle" font-size="7.5" fill="#e3261c" transform="translate(1229 265.86) rotate(44)">吉</text><text class="sf" x="0" y="2.8" text-anchor="middle" font-size="7.5" fill="#e3261c" transform="translate(1238.47 271.32) rotate(16)">林</text><text class="sf" x="0" y="2.8" text-anchor="middle" font-size="7.5" fill="#e3261c" transform="translate(1249.4 271.71) rotate(-12)">大</text><text class="sf" x="0" y="2.8" text-anchor="middle" font-size="7.5" fill="#e3261c" transform="translate(1259.23 266.91) rotate(-40)">学</text><g clip-path="url(#ac1)"><rect x="1212.7" y="347.6" width="64" height="64" fill="#323850"/><g filter="url(#ab2)"><rect x="1212.7" y="347.6" width="50" height="26" fill="#2d3350"/><rect x="1229.7" y="347.6" width="0.8" height="18" fill="#6a7390" opacity="0.7"/><rect x="1249.2" y="347.6" width="0.8" height="22" fill="#6a7390" opacity="0.7"/><rect x="1254.7" y="364.6" width="24" height="9" fill="#4a628a"/><rect x="1252.7" y="373.6" width="26" height="12" fill="#5d6c86"/><rect x="1258.7" y="375.6" width="9" height="9" fill="#2a2536"/><rect x="1261.7" y="351.6" width="6" height="13" fill="#b9bcc0"/><rect x="1258.7" y="352.6" width="2.6" height="12" fill="#e8e8e4"/><rect x="1268.7" y="359.6" width="4" height="6" fill="#b86a3a"/><ellipse cx="1255.7" cy="354.6" rx="3.5" ry="5" fill="#15151c"/><ellipse cx="1220.7" cy="359.6" rx="3" ry="2" fill="#9aa0a8" transform="rotate(-30 1220.7 359.6)"/><rect x="1271.7" y="373.6" width="4" height="16" fill="#d5d3d0"/><ellipse cx="1214.7" cy="373.6" rx="5" ry="6" fill="#6b6f74"/><ellipse cx="1234.7" cy="372.6" rx="13" ry="9" fill="#b39a70"/><ellipse cx="1248.7" cy="376.6" rx="7" ry="9" fill="#a88f66"/><ellipse cx="1227.7" cy="387.6" rx="9" ry="14" fill="#b0966c"/><ellipse cx="1231.7" cy="400.6" rx="9" ry="9" fill="#c3a87e"/><ellipse cx="1251.7" cy="387.6" rx="5" ry="9" fill="#a78c63"/><ellipse cx="1230.7" cy="373.6" rx="6" ry="3" fill="#d2ba8e" transform="rotate(-25 1230.7 373.6)"/><ellipse cx="1224.7" cy="391.6" rx="3" ry="7" fill="#d3bb8d" transform="rotate(10 1224.7 391.6)"/><ellipse cx="1239.2" cy="386.1" rx="8" ry="10.5" fill="#dcb59b" transform="rotate(-8 1239.2 386.1)"/><ellipse cx="1235.2" cy="385" rx="2.2" ry="0.7" fill="#6a4a3a" transform="rotate(8 1235.2 385)"/><ellipse cx="1242.9" cy="384.2" rx="2.4" ry="0.7" fill="#6a4a3a" transform="rotate(-8 1242.9 384.2)"/><ellipse cx="1238.1" cy="388.6" rx="1.2" ry="2.2" fill="#c99c84"/><ellipse cx="1238.5" cy="393.3" rx="3.3" ry="1.2" fill="#b8434a" transform="rotate(-6 1238.5 393.3)"/><ellipse cx="1241.7" cy="406.6" rx="11" ry="8" fill="#cfa98e"/><ellipse cx="1261.7" cy="391.6" rx="8" ry="7" fill="#c39c82" transform="rotate(-30 1261.7 391.6)"/><ellipse cx="1256.7" cy="385.6" rx="4.5" ry="3.6" fill="#c9a388"/><ellipse cx="1258.7" cy="401.6" rx="7" ry="5" fill="#7c7486"/><ellipse cx="1249.7" cy="404.6" rx="6" ry="7" fill="#c7ad85"/></g></g><g clip-path="url(#ac2)"><rect x="1212.7" y="477.6" width="64" height="64" fill="#6c9440"/><g filter="url(#ab)"><rect x="1212.7" y="476.6" width="64" height="24" fill="#d8d8d5"/><rect x="1212.7" y="492.6" width="64" height="9" fill="#9ba896"/><ellipse cx="1270.7" cy="495.6" rx="9" ry="7" fill="#8e9c80"/><ellipse cx="1236.7" cy="491.6" rx="10" ry="3" fill="#a6ada0"/><rect x="1212.7" y="497.6" width="14" height="4" fill="#d0d0c8" transform="rotate(8 1219.7 499.6)"/><rect x="1247.3" y="483.6" width="0.7" height="16" fill="#5c5f5a"/><rect x="1253.7" y="489.6" width="0.7" height="10" fill="#5c5f5a"/><rect x="1257.7" y="491.6" width="0.7" height="8" fill="#5c5f5a"/><rect x="1224.7" y="487.6" width="0.7" height="12" fill="#5c5f5a"/><ellipse cx="1224.7" cy="489.6" rx="1.5" ry="5" fill="#555" opacity="0.7"/><ellipse cx="1220.7" cy="521.6" rx="12" ry="14" fill="#6a923e"/><ellipse cx="1248.7" cy="533.6" rx="30" ry="9" fill="#62893a"/><ellipse cx="1268.7" cy="513.6" rx="9" ry="8" fill="#78a246"/><ellipse cx="1234.2" cy="512.1" rx="17.5" ry="11.5" fill="#f3a3b6" transform="rotate(14 1234.2 512.1)"/><ellipse cx="1232.7" cy="507.6" rx="11" ry="7" fill="#f6b3c3" transform="rotate(10 1232.7 507.6)"/><ellipse cx="1229.7" cy="518.6" rx="10" ry="4" fill="#ee96ab" transform="rotate(18 1229.7 518.6)"/><ellipse cx="1255.2" cy="509.1" rx="8" ry="7.5" fill="#f1a0b3" transform="rotate(8 1255.2 509.1)"/><ellipse cx="1257.7" cy="511.6" rx="5" ry="5" fill="#f6b2c2"/><ellipse cx="1232.2" cy="506.4" rx="3.4" ry="1.1" fill="#d24a66" transform="rotate(14 1232.2 506.4)"/><ellipse cx="1221.3" cy="506" rx="1.6" ry="2.2" fill="#e23244" transform="rotate(15 1221.3 506)"/><ellipse cx="1241.9" cy="516.4" rx="2.4" ry="2" fill="#e23244" transform="rotate(-30 1241.9 516.4)"/><ellipse cx="1242.7" cy="496.6" rx="9" ry="3" fill="#3d9160" transform="rotate(-5 1242.7 496.6)"/><ellipse cx="1250.7" cy="498.6" rx="5" ry="2.4" fill="#2f8452" transform="rotate(20 1250.7 498.6)"/><rect x="1245.7" y="500.6" width="2.4" height="16" fill="#3f9462" transform="rotate(4 1246.9 508.6)"/><ellipse cx="1245.7" cy="519.6" rx="2.6" ry="2.6" fill="#2c7a4a"/><ellipse cx="1243.2" cy="497.3" rx="3" ry="1.3" fill="#f08aa2"/><ellipse cx="1258.7" cy="504.2" rx="6" ry="2.6" fill="#2f8452" transform="rotate(25 1258.7 504.2)"/><ellipse cx="1263.7" cy="510.6" rx="2.4" ry="5" fill="#358a56" transform="rotate(-15 1263.7 510.6)"/><ellipse cx="1249.7" cy="518.6" rx="3" ry="2.6" fill="#23252a"/><ellipse cx="1263.7" cy="526" rx="5" ry="2" fill="#ddd3ae" transform="rotate(15 1263.7 526)"/><ellipse cx="1266.7" cy="531.6" rx="4.4" ry="1.9" fill="#ddd3ae" transform="rotate(15 1266.7 531.6)"/><ellipse cx="1249.2" cy="538.6" rx="6" ry="2.4" fill="#ddd3ae" transform="rotate(15 1249.2 538.6)"/><ellipse cx="1269.7" cy="519.6" rx="3.2" ry="1.4" fill="#ddd3ae" transform="rotate(15 1269.7 519.6)"/><ellipse cx="1271.7" cy="515.1" rx="2" ry="1" fill="#ddd3ae" transform="rotate(15 1271.7 515.1)"/></g></g><g clip-path="url(#ac3)"><rect x="1212.7" y="607.6" width="64" height="64" fill="url(#sky)"/><g filter="url(#ab)"><ellipse cx="1224.7" cy="623.6" rx="14" ry="15" fill="#fff"/><ellipse cx="1218.7" cy="633.6" rx="12" ry="8" fill="#f4f7fb"/><ellipse cx="1232.7" cy="614.6" rx="6" ry="5" fill="#fff"/><ellipse cx="1242.7" cy="620.6" rx="8" ry="3.4" fill="#fff" transform="rotate(-12 1242.7 620.6)"/><ellipse cx="1252.7" cy="633.6" rx="26" ry="8.5" fill="#fdfdfe"/><ellipse cx="1264.7" cy="629.6" rx="12" ry="6" fill="#fff"/><ellipse cx="1238.7" cy="630.6" rx="12" ry="6" fill="#fff"/><ellipse cx="1244.7" cy="637.6" rx="34" ry="3" fill="#e9eef5"/><rect x="1212.7" y="640.6" width="64" height="32" fill="url(#wat)"/><ellipse cx="1248.7" cy="653.6" rx="22" ry="2" fill="#6f83a6" opacity="0.6"/><ellipse cx="1254.7" cy="661.6" rx="16" ry="2" fill="#5d7398" opacity="0.6"/></g><path d="M1212.7 636.6c4-2.600 9-3 13-1.400c3 1.200 6 1.800 9 2.200c6 .6 12 .2 18 1.200c8 .8 16 .8 23 1.600v1.600h-63z" fill="#4a6276"/><path d="M1212.7 635.2c3-1.400 7-1.600 10-.6c2 .8 3.600 1.600 5 2.400h-15z" fill="#6d879c"/><path d="M1222.3 657.6c-.6-5.400.4-9.400 3-10.400l3.400-.8c3 .4 4.400 3.400 4.800 8.400l1.200 14.800h-9.400l-.4-5.600l-1 3.400l-1.600-.4z" fill="#2a2d54"/><ellipse cx="1223.2" cy="659.6" rx="1.1" ry="2.4" fill="#c9a086"/><ellipse cx="1230.3" cy="643.2" rx="2.3" ry="3.1" fill="#caa088"/><path d="M1226.5 641.4a3.600 3 0 0 1 6.800-1.600l1.600-.2l.2 1.200l-2 .6z" fill="#1d2030"/></g><g clip-path="url(#ac4)"><rect x="1212.7" y="737.4" width="64" height="64" fill="#5a4b2c"/><g filter="url(#ab)"><ellipse cx="1238.7" cy="749.4" rx="16" ry="10" fill="#54502a"/><ellipse cx="1250.7" cy="759.4" rx="12" ry="9" fill="#6e5c34"/><ellipse cx="1242.7" cy="745.4" rx="6" ry="4" fill="#7a7a80" opacity="0.6"/><ellipse cx="1246.7" cy="755.4" rx="3" ry="2" fill="#9a9478" opacity="0.7"/><ellipse cx="1236.7" cy="761.4" rx="4" ry="2.6" fill="#8a8450" opacity="0.7"/><rect x="1233.7" y="739.4" width="2.6" height="22" fill="#3a2c1c"/><ellipse cx="1264.2" cy="752.4" rx="4.6" ry="11" fill="#e2ecef"/><ellipse cx="1260.7" cy="747.4" rx="3" ry="5" fill="#cfdcdc"/><ellipse cx="1271.7" cy="761.4" rx="9" ry="13" fill="#2c3b2e"/><ellipse cx="1263.7" cy="767.4" rx="5" ry="4" fill="#33432f"/><ellipse cx="1221.7" cy="761.4" rx="12" ry="11" fill="#3e3a20"/><ellipse cx="1217.7" cy="755.4" rx="5" ry="4" fill="#7c7a3a" opacity="0.8"/><ellipse cx="1253.7" cy="770.4" rx="4" ry="2" fill="#252a1c"/><ellipse cx="1268.7" cy="770.4" rx="5" ry="2.4" fill="#55604a"/><rect x="1212.7" y="771.8" width="64" height="30" fill="#c7b28a"/><ellipse cx="1230.7" cy="773.4" rx="16" ry="1.6" fill="#a8946c"/><ellipse cx="1254.7" cy="776.4" rx="20" ry="2" fill="#d5c29a"/></g><path d="M1231.7 782.4c0-5.600 1-9.200 3.400-10.200c2.800.4 4.400 3.800 5 10.200z" fill="#c9ab8c"/><path d="M1233.7 767c-1.400-2.200-.6-4.800 1.600-5.200c2 .2 2.600 1.800 2.400 3.600c-1.400-.2-2.800.4-4 1.600z" fill="#2a221c"/><circle cx="1236.4" cy="765.6" r="1.500" fill="#cfa78c"/></g></svg></div></body></html>
